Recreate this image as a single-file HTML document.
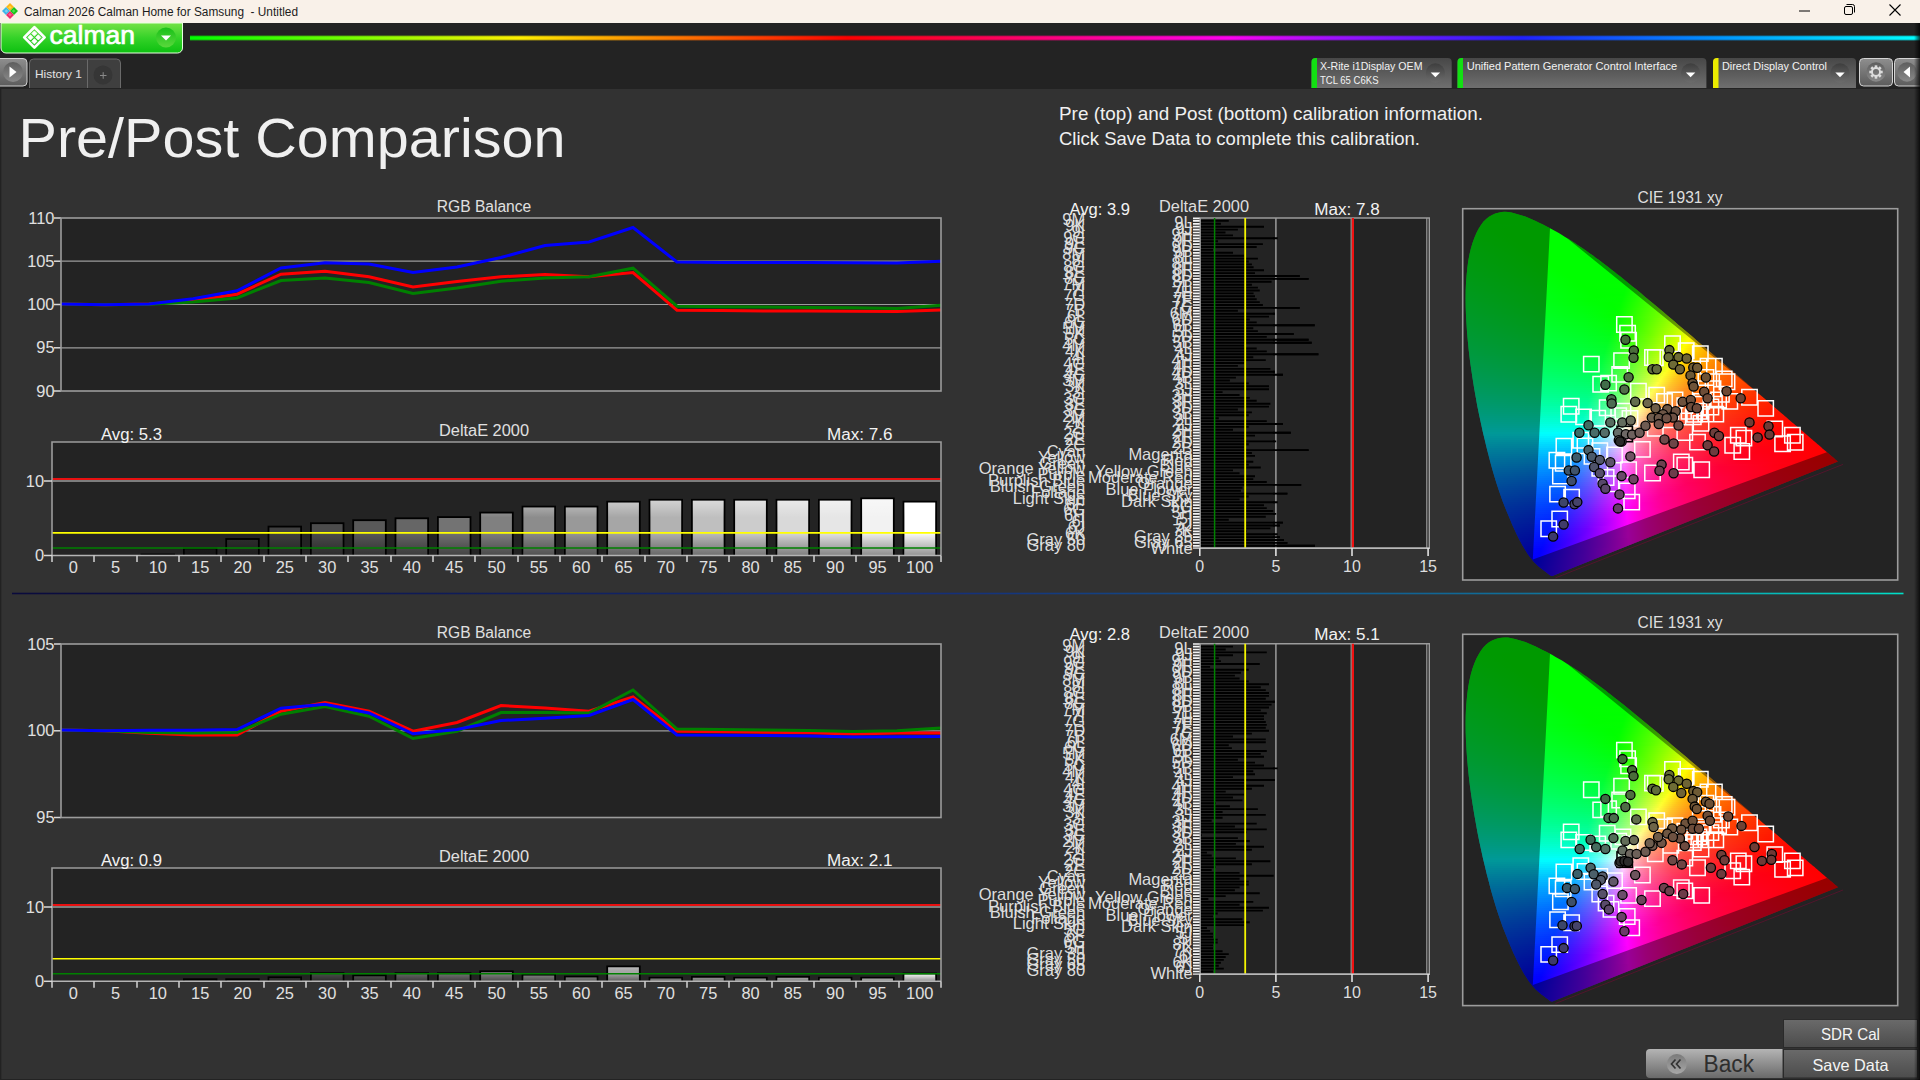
<!DOCTYPE html>
<html lang="en"><head><meta charset="utf-8"><title>Calman 2026 Calman Home for Samsung - Untitled</title>
<style>
html,body{margin:0;padding:0;width:1920px;height:1080px;overflow:hidden;background:#323232}
body{position:relative;font-family:"Liberation Sans",sans-serif}
svg{position:absolute;left:0;top:0;display:block}
svg text{font-family:"Liberation Sans",sans-serif;white-space:pre}
.cie{position:absolute;width:375px;height:367px;clip-path:polygon(88.4px 365.9px,87.6px 366px,86.8px 365.7px,86px 365.3px,85.3px 364.7px,84.5px 364.2px,83.7px 363.5px,82.9px 362.9px,82.1px 362.3px,81.4px 361.8px,80.7px 361.2px,79.9px 360.6px,79px 360px,78.1px 359.3px,77.1px 358.6px,76.1px 357.7px,74.9px 356.7px,73.7px 355.7px,73.1px 355.1px,72.4px 354.4px,71.7px 353.8px,71px 353.1px,70.3px 352.4px,69.5px 351.5px,68.7px 350.6px,67.9px 349.5px,67px 348.4px,66px 347.2px,65px 345.8px,64px 344.4px,62.9px 342.7px,61.8px 341px,60.6px 339.1px,59.4px 337.1px,58.2px 335px,56.9px 332.6px,55.5px 330px,54.1px 327.2px,52.6px 324.2px,51.1px 321px,49.5px 317.6px,47.9px 313.9px,46.2px 309.8px,44.4px 305.6px,42.5px 301px,40.6px 296.2px,38.6px 291.2px,36.7px 285.7px,34.7px 280px,32.7px 273.9px,30.7px 267.4px,28.7px 260.7px,26.7px 253.6px,24.8px 246.2px,22.8px 238.6px,20.9px 230.6px,18.9px 222.3px,17px 213.6px,15.1px 204.8px,13.3px 195.9px,11.7px 186.9px,10.1px 177.9px,8.6px 168.6px,7.2px 159.3px,5.9px 150px,4.8px 140.7px,3.9px 131.7px,3.1px 122.9px,2.5px 114.1px,2px 105.4px,1.7px 96.8px,1.6px 88.6px,1.7px 80.6px,2px 73px,2.6px 65.5px,3.3px 58.2px,4.2px 51.3px,5.4px 44.8px,6.8px 38.8px,8.4px 33.2px,10.3px 28px,12.3px 23.2px,14.6px 18.8px,17px 15px,19.5px 11.6px,22.2px 8.9px,25px 6.7px,28.1px 4.9px,31.2px 3.6px,34.3px 2.7px,37.5px 2.1px,40.8px 1.8px,44.1px 2px,47.5px 2.6px,51px 3.4px,54.4px 4.4px,57.9px 5.4px,61.3px 6.5px,64.8px 7.9px,68.2px 9.4px,71.7px 11px,75.1px 12.7px,78.5px 14.3px,81.8px 16px,85.1px 17.7px,88.4px 19.5px,91.6px 21.3px,94.8px 23.1px,98px 25px,101.1px 26.9px,104.3px 28.8px,107.4px 30.8px,110.5px 32.8px,113.6px 34.9px,116.7px 37px,119.7px 39.1px,122.8px 41.2px,125.9px 43.4px,129px 45.6px,132px 47.9px,135.1px 50.1px,138.2px 52.4px,141.2px 54.7px,144.2px 57.1px,147.3px 59.4px,150.3px 61.8px,153.3px 64.2px,156.4px 66.6px,159.4px 69px,162.4px 71.4px,165.5px 73.9px,168.5px 76.4px,171.5px 78.8px,174.6px 81.3px,177.6px 83.8px,180.6px 86.4px,183.7px 88.9px,186.7px 91.4px,189.8px 93.9px,192.8px 96.5px,195.8px 99px,198.8px 101.6px,201.9px 104.2px,204.9px 106.7px,207.9px 109.3px,210.9px 111.8px,213.9px 114.4px,216.9px 116.9px,219.9px 119.5px,222.9px 122px,225.9px 124.6px,228.9px 127.1px,231.9px 129.7px,234.8px 132.2px,237.8px 134.7px,240.7px 137.2px,243.6px 139.7px,246.5px 142.2px,249.4px 144.7px,252.3px 147.2px,255.1px 149.6px,258px 152.1px,260.8px 154.5px,263.6px 156.9px,266.3px 159.3px,269.1px 161.6px,271.8px 164px,274.5px 166.3px,277.2px 168.6px,279.9px 170.9px,282.5px 173.1px,285.1px 175.4px,287.7px 177.6px,290.2px 179.7px,292.7px 181.9px,295.2px 184px,297.6px 186.1px,300px 188.1px,302.3px 190.1px,304.6px 192.1px,306.8px 194px,309px 195.9px,311.1px 197.7px,313.2px 199.5px,315.2px 201.2px,317.2px 202.9px,319.1px 204.6px,321px 206.2px,322.9px 207.8px,324.7px 209.4px,326.5px 210.9px,328.2px 212.4px,329.9px 213.8px,331.5px 215.2px,333.1px 216.6px,334.6px 217.8px,336.1px 219.1px,337.5px 220.3px,338.9px 221.5px,340.2px 222.6px,341.5px 223.7px,342.7px 224.8px,343.9px 225.8px,345px 226.8px,346.1px 227.8px,347.2px 228.7px,348.2px 229.6px,349.2px 230.4px,350.2px 231.2px,351.1px 232px,352px 232.8px,352.8px 233.5px,353.6px 234.2px,354.4px 234.8px,355.2px 235.5px,355.9px 236.1px,356.6px 236.7px,357.3px 237.3px,357.9px 237.9px,358.5px 238.4px,359.7px 239.4px,360.9px 240.4px,361.9px 241.3px,362.9px 242.2px,363.9px 243px,364.8px 243.7px,365.6px 244.5px,366.3px 245.1px,367px 245.7px,367.7px 246.2px,368.6px 247px,369.3px 247.6px,370px 248.2px,370.7px 248.8px,371.3px 249.4px,372px 249.9px,372.6px 250.4px,373.2px 251px,373.8px 251.5px,374px 251.6px);overflow:hidden}
.cie i{display:block;height:2px;width:100%}
.r0{background:linear-gradient(90deg,#0f0 37px,#0f0 43px)}
.r1{background:linear-gradient(90deg,#0f0 28px,#0f0 53px)}
.r2{background:linear-gradient(90deg,#0f0 24px,#0f0 60px)}
.r3{background:linear-gradient(90deg,#0f0 21px,#0f0 67px)}
.r4{background:linear-gradient(90deg,#0f0 18px,#0f0 71px)}
.r5{background:linear-gradient(90deg,#0f0 16px,#0f0 74px)}
.r6{background:linear-gradient(90deg,#00ff01 14px,#0f0 79px)}
.r7{background:linear-gradient(90deg,#00ff03 13px,#0f0 84px)}
.r8{background:linear-gradient(90deg,#00ff04 12px,#0f0 59px,#0f0 88px)}
.r9{background:linear-gradient(90deg,#00ff05 11px,#0f0 47px,#0f0 91px)}
.r10{background:linear-gradient(90deg,#00ff07 10px,#0f0 46px,#0f0 94px)}
.r11{background:linear-gradient(90deg,#00ff08 9px,#0f0 47px,#0f0 97px)}
.r12{background:linear-gradient(90deg,#00ff09 8px,#0f0 48px,#0f0 102px)}
.r13{background:linear-gradient(90deg,#00ff0b 7px,#0f0 50px,#0f0 105px)}
.r14{background:linear-gradient(90deg,#00ff0c 6px,#0f0 53px,#0f0 108px)}
.r15{background:linear-gradient(90deg,#00ff0d 6px,#0f0 55px,#0f0 111px)}
.r16{background:linear-gradient(90deg,#00ff0f 5px,#0f0 58px,#0f0 114px)}
.r17{background:linear-gradient(90deg,#00ff10 4px,#0f0 60px,#0f0 117px)}
.r18{background:linear-gradient(90deg,#00ff12 3px,#0f0 63px,#0f0 120px)}
.r19{background:linear-gradient(90deg,#00ff13 3px,#0f0 66px,#0f0 122px)}
.r20{background:linear-gradient(90deg,#00ff14 3px,#0f0 68px,#0f0 125px)}
.r21{background:linear-gradient(90deg,#00ff16 2px,#0f0 71px,#0f0 128px)}
.r22{background:linear-gradient(90deg,#00ff17 2px,#0f0 74px,#0f0 131px)}
.r23{background:linear-gradient(90deg,#00ff18 2px,#0f0 77px,#0f0 135px)}
.r24{background:linear-gradient(90deg,#00ff19 1px,#0f0 80px,#0f0 137px)}
.r25{background:linear-gradient(90deg,#00ff1b 1px,#0f0 82px,#0f0 139px)}
.r26{background:linear-gradient(90deg,#00ff1c 1px,#0f0 85px,#0f0 142px)}
.r27{background:linear-gradient(90deg,#00ff1e 0px,#0f0 88px,#0f0 145px)}
.r28{background:linear-gradient(90deg,#00ff1f 0px,#0f0 91px,#0f0 147px)}
.r29{background:linear-gradient(90deg,#00ff20 0px,#0f0 94px,#0f0 150px)}
.r30{background:linear-gradient(90deg,#00ff21 0px,#0f0 96px,#0f0 153px)}
.r31{background:linear-gradient(90deg,#00ff23 0px,#0f0 99px,#0f0 155px)}
.r32{background:linear-gradient(90deg,#00ff24 0px,#0f0 102px,#0f0 157px)}
.r33{background:linear-gradient(90deg,#00ff25 0px,#0f0 105px,#0f0 160px)}
.r34{background:linear-gradient(90deg,#00ff27 0px,#0f0 108px,#0f0 162px)}
.r35{background:linear-gradient(90deg,#00ff28 0px,#0f0 111px,#02ff00 164px,#04ff00 165px)}
.r36{background:linear-gradient(90deg,#00ff2a 0px,#0f0 114px,#02ff00 163px,#0bff00 168px)}
.r37{background:linear-gradient(90deg,#00ff2b 0px,#0f0 116px,#03ff00 163px,#1f0 170px)}
.r38{background:linear-gradient(90deg,#00ff2d 0px,#0f0 119px,#02ff00 162px,#17ff00 172px)}
.r39{background:linear-gradient(90deg,#00ff2e 0px,#0f0 122px,#01ff00 161px,#1fff00 175px)}
.r40{background:linear-gradient(90deg,#00ff2f 0px,#0f0 125px,#03ff00 161px,#25ff00 177px)}
.r41{background:linear-gradient(90deg,#00ff31 0px,#0f0 128px,#02ff00 160px,#2dff00 180px)}
.r42{background:linear-gradient(90deg,#0f3 0px,#0f0 131px,#01ff00 159px,#3f0 182px)}
.r43{background:linear-gradient(90deg,#00ff34 0px,#0f0 133px,#03ff00 159px,#3aff00 184px)}
.r44{background:linear-gradient(90deg,#00ff36 0px,#00ff02 125px,#02ff00 158px,#43ff00 187px)}
.r45{background:linear-gradient(90deg,#00ff37 0px,#00ff04 125px,#01ff00 157px,#4aff00 189px)}
.r46{background:linear-gradient(90deg,#00ff39 0px,#00ff06 124px,#0f0 146px,#03ff00 157px,#54ff00 192px)}
.r47{background:linear-gradient(90deg,#00ff3b 0px,#00ff07 124px,#0f0 147px,#02ff00 156px,#5bff00 194px)}
.r48{background:linear-gradient(90deg,#00ff3c 0px,#00ff0a 123px,#0f0 149px,#03ff00 156px,#63ff00 196px)}
.r49{background:linear-gradient(90deg,#00ff3e 0px,#00ff0b 123px,#0f0 151px,#05ff00 156px,#6bff00 198px)}
.r50{background:linear-gradient(90deg,#00ff40 0px,#00ff0d 123px,#02ff00 154px,#6eff00 198px,#76ff00 201px)}
.r51{background:linear-gradient(90deg,#00ff41 0px,#00ff0f 122px,#03ff00 154px,#71ff00 198px,#7fff00 203px)}
.r52{background:linear-gradient(90deg,#00ff43 0px,#0f1 122px,#02ff00 153px,#6eff00 196px,#8f0 205px)}
.r53{background:linear-gradient(90deg,#00ff45 0px,#00ff13 121px,#02ff02 152px,#6eff00 195px,#94ff00 208px)}
.r54{background:linear-gradient(90deg,#00ff47 0px,#00ff15 121px,#03ff04 152px,#50ff00 183px,#9dff00 210px)}
.r55{background:linear-gradient(90deg,#00ff49 0px,#00ff17 121px,#02ff06 151px,#30ff00 170px,#9eff00 209px,#abff00 213px)}
.r56{background:linear-gradient(90deg,#00ff4a 0px,#00ff1a 120px,#02ff09 150px,#35ff00 171px,#a5ff00 210px,#b5ff00 215px)}
.r57{background:linear-gradient(90deg,#00ff4c 0px,#00ff1b 120px,#03ff0b 150px,#3cff00 173px,#acff00 211px,#c0ff00 217px)}
.r58{background:linear-gradient(90deg,#00ff4e 0px,#00ff1e 119px,#02ff0d 149px,#47ff00 176px,#b6ff00 213px,#ceff00 220px)}
.r59{background:linear-gradient(90deg,#00ff50 0px,#00ff20 119px,#01ff10 148px,#4fff00 178px,#beff00 214px,#daff00 222px)}
.r60{background:linear-gradient(90deg,#00ff52 0px,#0f2 119px,#03ff12 148px,#5aff00 181px,#c9ff00 216px,#e6ff00 224px)}
.r61{background:linear-gradient(90deg,#00ff54 0px,#00ff25 118px,#02ff15 147px,#65ff00 184px,#d5ff00 218px,#f3ff00 226px)}
.r62{background:linear-gradient(90deg,#00ff56 0px,#00ff27 118px,#01ff17 146px,#6eff00 186px,#e1ff00 220px,#fffe00 228px,#fffa00 229px)}
.r63{background:linear-gradient(90deg,#00ff58 0px,#00ff29 118px,#03ff1a 146px,#6fff00 185px,#dfff00 218px,#fffc00 227px,#fe0 231px)}
.r64{background:linear-gradient(90deg,#00ff5a 0px,#00ff2c 117px,#02ff1c 145px,#6fff03 184px,#e0ff00 217px,#ff0 225px,#ffde00 234px)}
.r65{background:linear-gradient(90deg,#00ff5d 0px,#00ff2e 117px,#01ff1f 144px,#6fff06 183px,#a7ff00 200px,#fffd00 224px,#ffd300 236px)}
.r66{background:linear-gradient(90deg,#00ff5f 0px,#00ff30 117px,#03ff22 144px,#6fff09 182px,#a7ff00 199px,#feff00 222px,#ffc900 238px)}
.r67{background:linear-gradient(90deg,#00ff61 0px,#0f3 117px,#02ff25 143px,#6fff0c 181px,#b3ff00 201px,#fffe00 221px,#ffc500 238px,#ffbd00 241px)}
.r68{background:linear-gradient(90deg,#00ff63 1px,#00ff35 117px,#01ff28 142px,#6cff10 179px,#c2ff00 204px,#fffc00 220px,#ffc300 237px,#ffb300 243px)}
.r69{background:linear-gradient(90deg,#00ff65 1px,#00ff38 117px,#03ff2a 142px,#6fff12 179px,#cfff00 206px,#ff0 218px,#ffc400 235px,#ffa800 246px)}
.r70{background:linear-gradient(90deg,#00ff68 1px,#00ff3b 116px,#02ff2d 141px,#6fff15 178px,#e0ff00 209px,#fffd00 217px,#ffc300 234px,#ffa000 248px)}
.r71{background:linear-gradient(90deg,#00ff6a 1px,#00ff3d 116px,#01ff30 140px,#6cff19 176px,#ddff01 207px,#feff00 215px,#ffc400 232px,#f90 250px)}
.r72{background:linear-gradient(90deg,#00ff6c 1px,#00ff40 116px,#03ff33 140px,#6fff1c 176px,#e3ff03 207px,#fffe00 214px,#ffc500 230px,#ff9100 252px,#ff8f00 253px)}
.r73{background:linear-gradient(90deg,#00ff6f 2px,#00ff43 116px,#02ff37 139px,#6fff20 175px,#e0ff08 205px,#fffc01 213px,#ffc300 229px,#ff9000 251px,#f80 255px)}
.r74{background:linear-gradient(90deg,#00ff71 2px,#00ff46 116px,#01ff3a 138px,#6cff24 173px,#ddff0c 203px,#ffff05 211px,#ffce00 224px,#ff9800 245px,#ff8000 258px)}
.r75{background:linear-gradient(90deg,#00ff74 2px,#00ff48 116px,#03ff3d 138px,#6fff27 173px,#e3ff0f 203px,#fffd09 210px,#ffc900 224px,#ff9400 245px,#ff7b00 259px)}
.r76{background:linear-gradient(90deg,#00ff76 3px,#00ff4b 117px,#02ff40 137px,#6cff2b 171px,#dbff15 200px,#ffff0e 208px,#ffc400 224px,#ff8f00 246px,#ff7500 261px)}
.r77{background:linear-gradient(90deg,#00ff79 3px,#00ff4e 117px,#01ff44 136px,#6cff2f 170px,#ddff19 199px,#fffe12 207px,#ffc202 223px,#ff8d00 245px,#ff6e00 264px)}
.r78{background:linear-gradient(90deg,#00ff7b 3px,#00ff51 117px,#02ff47 136px,#70ff32 170px,#e3ff1c 199px,#fffc16 206px,#ffc105 222px,#ff9600 239px,#ff6700 267px)}
.r79{background:linear-gradient(90deg,#00ff7e 4px,#00ff54 117px,#01ff4b 135px,#6cff37 168px,#dbff22 196px,#fffe1b 204px,#ffc50a 219px,#f90 236px,#ff6900 264px,#ff6200 269px)}
.r80{background:linear-gradient(90deg,#00ff81 4px,#00ff57 117px,#03ff4e 135px,#70ff3a 168px,#e1ff25 196px,#fffd1f 203px,#ffc30d 218px,#ff8e00 239px,#ff6000 269px,#ff5c00 272px)}
.r81{background:linear-gradient(90deg,#00ff84 4px,#00ff5b 117px,#02ff52 134px,#70ff3e 167px,#e3ff29 195px,#ffff24 201px,#ffc512 216px,#ff9101 236px,#ff6200 265px,#ff5700 274px)}
.r82{background:linear-gradient(90deg,#00ff86 5px,#00ff5e 118px,#01ff56 133px,#6cff43 165px,#dbff30 192px,#fffd29 200px,#ffc315 215px,#ff8f03 235px,#ff6000 264px,#ff5300 276px)}
.r83{background:linear-gradient(90deg,#00ff89 5px,#00ff61 118px,#03ff5a 133px,#70ff47 165px,#e1ff33 192px,#feff2e 198px,#ffc118 214px,#ff8e06 234px,#ff6e00 252px,#ff4e00 278px)}
.r84{background:linear-gradient(90deg,#00ff8c 5px,#00ff65 118px,#02ff5e 132px,#6cff4c 163px,#deff39 190px,#fffe33 197px,#ffc61e 211px,#ff900a 231px,#ff6b00 252px,#ff4900 281px)}
.r85{background:linear-gradient(90deg,#00ff8f 5px,#00ff68 118px,#01ff62 131px,#6cff50 162px,#e0ff3d 189px,#fffc37 196px,#ffc421 210px,#ff8e0d 230px,#ff6500 254px,#ff4500 283px)}
.r86{background:linear-gradient(90deg,#00ff92 6px,#00ff6c 119px,#03ff66 131px,#70ff54 162px,#e1ff42 188px,#ffff3e 194px,#ffc526 208px,#ff9111 227px,#ff6200 254px,#ff4100 285px)}
.r87{background:linear-gradient(90deg,#00ff95 6px,#00ff6f 119px,#02ff6a 130px,#6cff5a 160px,#deff48 186px,#fffd42 193px,#ffc32a 207px,#ff8f14 226px,#ff6101 253px,#ff3c00 288px)}
.r88{background:linear-gradient(90deg,#00ff98 7px,#00ff73 120px,#01ff6f 129px,#6cff5f 159px,#dfff4d 185px,#feff49 191px,#ffc12e 206px,#ff8d17 225px,#ff5f03 252px,#ff3900 290px)}
.r89{background:linear-gradient(90deg,#00ff9c 7px,#0f7 120px,#03ff73 129px,#70ff63 159px,#e1ff53 184px,#fffe4e 190px,#ffc634 203px,#ff921d 221px,#ff6308 247px,#ff4900 269px,#ff3400 293px)}
.r90{background:linear-gradient(90deg,#00ff9f 7px,#00ff7b 121px,#02ff78 128px,#6cff69 157px,#deff59 182px,#fffc53 189px,#ffc438 202px,#ff9120 220px,#ff620a 246px,#ff4500 271px,#ff3100 295px)}
.r91{background:linear-gradient(90deg,#00ffa2 8px,#00ff7f 122px,#04ff7c 128px,#71ff6d 157px,#dfff5e 181px,#ffff5a 187px,#ffc63e 200px,#ff9124 218px,#ff620d 244px,#ff4100 273px,#ff2d00 298px)}
.r92{background:linear-gradient(90deg,#00ffa6 8px,#00ff83 123px,#03ff81 127px,#6dff73 155px,#dcff65 179px,#fffd5f 186px,#ffc442 199px,#ff8f27 217px,#ff600f 243px,#ff3d00 275px,#ff2b00 299px)}
.r93{background:linear-gradient(90deg,#0fa 8px,#00ff87 123px,#05ff86 127px,#71ff78 155px,#e3ff6a 179px,#feff67 184px,#ffc246 198px,#ff8d2a 216px,#ff5e12 242px,#ff3800 278px,#ff2800 301px)}
.r94{background:linear-gradient(90deg,#00ffad 8px,#00ff8c 124px,#3bff84 141px,#a8ff77 166px,#fffe6c 183px,#ffc34c 196px,#ff8e2f 214px,#ff6016 239px,#ff3700 277px,#ff2500 303px)}
.r95{background:linear-gradient(90deg,#00ffb1 9px,#03ff90 125px,#6dff84 152px,#dcff77 175px,#fffc72 182px,#ffc150 195px,#ff8c32 213px,#ff5e18 238px,#ff3501 276px,#ff2100 306px)}
.r96{background:linear-gradient(90deg,#00ffb5 9px,#02ff96 124px,#6dff8a 151px,#ddff7e 174px,#ffff7a 180px,#ffc659 192px,#ff913a 209px,#ff621e 233px,#ff3906 269px,#ff2600 294px,#ff1e00 308px)}
.r97{background:linear-gradient(90deg,#00ffb9 10px,#00ff9b 123px,#6dff90 150px,#dfff84 173px,#fffd80 179px,#ffc45d 191px,#ff8f3d 208px,#ff6021 232px,#ff3708 268px,#ff2500 294px,#ff1b00 311px)}
.r98{background:linear-gradient(90deg,#00ffbd 10px,#03ffa1 123px,#6dff97 149px,#dbff8c 171px,#feff88 177px,#ffc262 190px,#ff8d40 207px,#ff5f23 231px,#ff3609 267px,#f20 296px,#ff1800 314px)}
.r99{background:linear-gradient(90deg,#00ffc1 11px,#01ffa7 122px,#6dff9d 148px,#ddff93 170px,#fffe8f 176px,#ffc469 188px,#ff9047 204px,#ff6229 227px,#ff380e 262px,#ff1f00 297px,#ff1500 316px)}
.r100{background:linear-gradient(90deg,#00ffc5 11px,#00ffad 121px,#6dffa4 147px,#dfff9a 169px,#fffb95 175px,#ffc16d 187px,#ff8e4b 203px,#ff602b 226px,#ff370f 261px,#ff1c00 300px,#ff1300 318px)}
.r101{background:linear-gradient(90deg,#00ffc9 12px,#03ffb3 121px,#6dffaa 146px,#dbffa2 167px,#ffff9f 173px,#ffc778 184px,#ff9454 199px,#ff6533 221px,#ff3b15 254px,#ff1a00 301px,#ff1000 321px)}
.r102{background:linear-gradient(90deg,#00ffce 12px,#01ffb9 120px,#6dffb1 145px,#ddffa9 166px,#fffda5 172px,#ffc57d 183px,#ff9258 198px,#ff6336 220px,#ff3917 253px,#ff1700 303px,#ff0e00 323px)}
.r103{background:linear-gradient(90deg,#00ffd3 12px,#00ffc0 119px,#68ffb9 143px,#d9ffb2 164px,#feffaf 170px,#ffc282 182px,#ff905c 197px,#ff6138 219px,#ff3819 252px,#ff1400 305px,#ff0c00 325px)}
.r104{background:linear-gradient(90deg,#00ffd7 12px,#02ffc6 119px,#6dffc0 143px,#dbffba 163px,#fffeb7 169px,#ffc48a 180px,#ff9062 195px,#ff613d 217px,#ff371c 250px,#ff1401 302px,#ff0900 327px)}
.r105{background:linear-gradient(90deg,#00ffdc 13px,#01ffcd 118px,#6dffc8 142px,#ddffc2 162px,#fcffc1 167px,#ffbd8c 180px,#ff8b63 195px,#ff5d3e 217px,#ff351e 250px,#ff1202 303px,#ff0700 330px)}
.r106{background:linear-gradient(90deg,#00ffe1 13px,#00ffd5 117px,#68ffd0 140px,#d9ffcb 160px,#ffffca 166px,#ffc89c 176px,#ff9471 190px,#ff664a 210px,#ff3c27 240px,#ff1809 288px,#ff0900 321px,#ff0500 332px)}
.r107{background:linear-gradient(90deg,#00ffe6 13px,#02ffdc 117px,#6effd8 140px,#e1ffd4 160px,#fffcd1 165px,#ffc5a1 175px,#ff9275 189px,#ff644d 209px,#ff3a29 239px,#ff160a 287px,#ff0700 323px,#ff0300 334px)}
.r108{background:linear-gradient(90deg,#00ffeb 14px,#01ffe3 116px,#6effe0 139px,#dfd 158px,#feffdd 163px,#ffc3a7 174px,#ff9079 188px,#ff6150 208px,#ff392c 238px,#ff150c 286px,#ff0400 326px,#f00 337px)}
.r109{background:linear-gradient(90deg,#00fff1 14px,#00ffeb 115px,#63ffe9 136px,#d2ffe7 155px,#fffde5 162px,#ffc5b1 172px,#ff9080 186px,#ff6155 206px,#ff382f 236px,#ff140e 284px,#ff0200 328px,#f00 339px)}
.r110{background:linear-gradient(90deg,#00fff6 15px,#02fff3 115px,#6efff2 137px,#e1fff1 156px,#fcfff1 160px,#ffbdb2 172px,#ff8b82 186px,#ff5d57 206px,#ff342f 237px,#ff120e 286px,#f00 331px,#f00 341px)}
.r111{background:linear-gradient(90deg,#00fffc 15px,#00fffc 114px,#6efffc 136px,#dcfffb 154px,#fffffb 159px,#ffc4c1 169px,#ff918f 182px,#ff6361 201px,#ff3938 230px,#ff1515 276px,#f00 332px,#f00 344px)}
.r112{background:linear-gradient(90deg,#00fcff 16px,#00faff 113px,#61f9ff 133px,#d2f8ff 152px,#fff5fc 159px,#ffbdc3 169px,#ff898e 183px,#ff5b5f 203px,#ff3336 233px,#ff1113 281px,#f00 330px,#f00 346px)}
.r113{background:linear-gradient(90deg,#00f6ff 16px,#02f1ff 113px,#6df0ff 135px,#dfeeff 154px,#ffebfd 159px,#ffb5c4 169px,#ff848f 183px,#ff5760 203px,#ff3037 233px,#ff0f14 281px,#ff0002 326px,#f00 349px)}
.r114{background:linear-gradient(90deg,#00f1ff 17px,#00e9ff 112px,#69e7ff 134px,#d8e4ff 153px,#ffe2fe 159px,#ffaec5 169px,#ff7e91 183px,#ff5362 203px,#ff2e39 233px,#ff0d15 281px,#ff0004 322px,#f00 351px)}
.r115{background:linear-gradient(90deg,#00ebff 17px,#03e2ff 112px,#70deff 135px,#dfdaff 154px,#ffd9fe 159px,#ffa7c6 169px,#ff7992 183px,#ff5063 203px,#ff2b3a 233px,#ff0b16 281px,#ff0006 319px,#f00 354px)}
.r116{background:linear-gradient(90deg,#00e5ff 18px,#01daff 111px,#6cd6ff 134px,#ded1ff 154px,#ffd0ff 159px,#ffa0c8 169px,#ff7494 183px,#ff4c65 203px,#ff283b 233px,#ff0a17 281px,#ff0008 315px,#f00 354px,#f00 355px)}
.r117{background:linear-gradient(90deg,#00e0ff 18px,#00d3ff 110px,#68ceff 133px,#d8c8ff 153px,#fec6ff 159px,#ff96c4 170px,#ff6a8f 185px,#ff4461 206px,#ff2238 238px,#ff0414 289px,#ff0005 326px,#f00 358px)}
.r118{background:linear-gradient(90deg,#00dbff 19px,#03ccff 110px,#6fc6ff 134px,#debfff 154px,#febeff 159px,#ff8cc1 171px,#ff638e 186px,#ff3e5f 208px,#ff1d36 241px,#ff0113 294px,#f00 354px,#f00 360px)}
.r119{background:linear-gradient(90deg,#00d5ff 19px,#01c5ff 109px,#6bbeff 133px,#deb7ff 154px,#fdb5ff 159px,#ff83be 172px,#ff5a8a 188px,#ff375c 211px,#ff1733 246px,#ff0013 297px,#f00 357px,#f00 362px)}
.r120{background:linear-gradient(90deg,#00d0ff 20px,#00beff 108px,#68b7ff 132px,#d8afff 153px,#ffaafc 160px,#ff80c4 171px,#ff5a91 186px,#ff3762 208px,#ff1839 241px,#ff0016 292px,#f00 358px,#f00 364px)}
.r121{background:linear-gradient(90deg,#00cbff 20px,#02b8ff 108px,#6eafff 133px,#dea7ff 154px,#ffa2fc 160px,#ff7ac5 171px,#ff548f 187px,#ff3362 209px,#ff1538 243px,#ff0018 289px,#f00 360px,#f00 367px)}
.r122{background:linear-gradient(90deg,#00c6ff 21px,#01b1ff 107px,#6ba9ff 132px,#dd9fff 154px,#ff9bfd 160px,#ff72c2 172px,#ff4e8e 188px,#ff2d60 211px,#ff1136 246px,#ff001b 286px,#f00 361px,#f00 370px)}
.r123{background:linear-gradient(90deg,#00c1ff 21px,#00abff 106px,#67a2ff 131px,#d898ff 153px,#ff93fe 160px,#ff6cc3 172px,#ff498f 188px,#ff2a61 211px,#ff0e38 246px,#ff001e 282px,#f00 361px,#f00 372px)}
.r124{background:linear-gradient(90deg,#00bcff 22px,#02a5ff 106px,#6d9bff 132px,#dd90ff 154px,#ff8cfe 160px,#ff67c4 172px,#ff4591 188px,#ff2762 211px,#ff0c39 246px,#ff0021 279px,#ff0001 358px,#f00 374px)}
.r125{background:linear-gradient(90deg,#00b7ff 22px,#00a0ff 105px,#6a95ff 131px,#dd89ff 154px,#ff85ff 160px,#ff61c5 172px,#ff4192 188px,#ff2464 211px,#ff0a3a 246px,#ff0024 275px,#ff0004 351px,#f00 374px)}
.r126{background:linear-gradient(90deg,#00b2ff 23px,#039aff 105px,#708eff 132px,#e282ff 155px,#fe7eff 160px,#ff5ac2 173px,#ff3a8e 190px,#ff1e60 214px,#ff0638 250px,#ff0025 276px,#ff0005 352px,#f00 373px)}
.r127{background:linear-gradient(90deg,#00aeff 23px,#0294ff 104px,#6d88ff 131px,#dd7bff 154px,#fe78ff 160px,#ff53c0 174px,#ff348b 192px,#ff195d 217px,#ff0235 255px,#ff0012 316px,#ff0001 368px)}
.r128{background:linear-gradient(90deg,#00a9ff 24px,#008fff 103px,#6e82ff 131px,#dc75ff 154px,#fd71ff 160px,#ff4ec1 174px,#ff308c 192px,#ff165e 217px,#ff0036 255px,#ff0013 316px,#ff0003 363px)}
.r129{background:linear-gradient(90deg,#00a4ff 24px,#028aff 103px,#6f7cff 131px,#e26eff 155px,#ff68fc 161px,#ff49c2 174px,#ff2d8d 192px,#ff135e 218px,#ff0037 255px,#ff0014 316px,#ff0005 358px)}
.r130{background:linear-gradient(90deg,#00a0ff 25px,#0185ff 102px,#6c77ff 130px,#dc68ff 154px,#ff62fc 161px,#ff44c3 174px,#ff298e 192px,#ff105f 218px,#ff003b 251px,#ff0017 310px,#ff0007 353px)}
.r131{background:linear-gradient(90deg,#009bff 26px,#0080ff 101px,#6d71ff 130px,#dc62ff 154px,#ff5cfd 161px,#ff40c4 174px,#ff2590 192px,#ff0e61 218px,#ff003f 248px,#ff001a 305px,#ff000a 348px)}
.r132{background:linear-gradient(90deg,#0097ff 26px,#027bff 101px,#6e6cff 130px,#e15cff 155px,#ff57fe 161px,#ff3bc5 174px,#ff2291 192px,#ff0b62 218px,#f04 244px,#ff001e 298px,#ff000c 343px)}
.r133{background:linear-gradient(90deg,#0092ff 27px,#0176ff 100px,#6b67ff 129px,#dc57ff 154px,#ff51fe 161px,#ff37c6 174px,#ff1f92 192px,#ff0963 218px,#ff0049 240px,#ff0023 292px,#ff000f 338px)}
.r134{background:linear-gradient(90deg,#008eff 27px,#0072ff 99px,#6862ff 128px,#dc51ff 154px,#ff4cff 161px,#ff32c7 174px,#ff1b93 192px,#ff0664 218px,#ff004c 238px,#ff0026 288px,#f01 333px)}
.r135{background:linear-gradient(90deg,#008aff 28px,#026dff 99px,#6d5dff 129px,#e04bff 155px,#ff46ff 161px,#ff2dc4 175px,#ff1690 194px,#ff0261 221px,#ff0038 262px,#ff0014 327px,#ff0014 328px)}
.r136{background:linear-gradient(90deg,#0086ff 29px,#0169ff 98px,#6f57ff 129px,#e045ff 155px,#fe41ff 161px,#ff27c2 176px,#ff128f 195px,#ff005f 223px,#ff0036 265px,#ff0017 323px)}
.r137{background:linear-gradient(90deg,#0082ff 29px,#0364ff 98px,#7053ff 129px,#e040ff 155px,#fe3bff 161px,#ff22bf 177px,#ff0d8b 197px,#ff0063 221px,#ff003a 262px,#ff001a 318px)}
.r138{background:linear-gradient(90deg,#007dff 30px,#0260ff 97px,#6d4eff 128px,#e03bff 155px,#ff35fc 162px,#ff1fc4 176px,#ff0b8f 196px,#ff006a 217px,#ff003f 256px,#ff001d 313px)}
.r139{background:linear-gradient(90deg,#0079ff 31px,#005dff 96px,#6e4aff 128px,#e036ff 155px,#ff30fd 162px,#ff1bc5 176px,#ff0890 196px,#ff006e 215px,#ff0043 253px,#ff0020 308px)}
.r140{background:linear-gradient(90deg,#0075ff 31px,#0258ff 96px,#6f45ff 128px,#e031ff 155px,#ff2bfd 162px,#ff16c2 177px,#ff048f 197px,#ff006b 218px,#ff0040 257px,#ff0023 303px)}
.r141{background:linear-gradient(90deg,#0071ff 32px,#0155ff 95px,#6c41ff 127px,#df2cff 155px,#ff26fe 162px,#ff13c3 177px,#ff0290 197px,#ff0061 226px,#ff0037 270px,#ff0026 298px)}
.r142{background:linear-gradient(90deg,#006dff 33px,#0051ff 94px,#6d3dff 127px,#df28ff 155px,#ff22fe 162px,#ff0fc4 177px,#ff0091 197px,#ff0062 226px,#ff0038 270px,#ff002a 293px)}
.r143{background:linear-gradient(90deg,#0069ff 33px,#024dff 94px,#6e38ff 127px,#df23ff 155px,#ff1dff 162px,#ff0bc5 177px,#ff0096 195px,#ff0067 223px,#ff003d 265px,#ff002e 288px)}
.r144{background:linear-gradient(90deg,#0065ff 34px,#0149ff 93px,#6c35ff 126px,#df1fff 155px,#ff19ff 162px,#ff08c6 177px,#ff009b 193px,#ff006b 221px,#ff0040 262px,#ff0032 283px)}
.r145{background:linear-gradient(90deg,#0062ff 35px,#0346ff 93px,#7030ff 127px,#e319ff 156px,#fe14ff 162px,#ff04c3 178px,#ff0090 199px,#ff0061 229px,#ff0038 274px,#ff0036 278px)}
.r146{background:linear-gradient(90deg,#005eff 35px,#0242ff 92px,#6e2dff 126px,#df16ff 155px,#ff0ffc 163px,#ff00c1 179px,#ff008d 201px,#ff005f 232px,#ff003a 273px)}
.r147{background:linear-gradient(90deg,#005aff 36px,#013fff 91px,#6f29ff 126px,#df12ff 155px,#ff0bfc 163px,#ff00c5 178px,#ff0090 200px,#ff0061 231px,#ff003e 268px)}
.r148{background:linear-gradient(90deg,#0056ff 37px,#033bff 91px,#7025ff 126px,#e30dff 156px,#ff07fd 163px,#ff00cf 175px,#ff009b 195px,#ff006b 224px,#ff0043 263px)}
.r149{background:linear-gradient(90deg,#0053ff 38px,#0238ff 90px,#6d22ff 125px,#de0aff 155px,#ff03fd 163px,#ff00c4 179px,#ff0090 201px,#ff0061 233px,#ff0048 258px)}
.r150{background:linear-gradient(90deg,#004fff 39px,#0135ff 89px,#6e1eff 125px,#de06ff 155px,#ff00fe 163px,#ff00c5 179px,#ff0091 201px,#ff0061 233px,#ff004d 253px)}
.r151{background:linear-gradient(90deg,#004bff 40px,#0232ff 89px,#6f1aff 125px,#e201ff 156px,#ff00fe 163px,#ff00c5 179px,#ff0092 201px,#ff0062 233px,#ff0053 248px)}
.r152{background:linear-gradient(90deg,#0047ff 41px,#012fff 88px,#6c17ff 124px,#de00ff 155px,#f0f 163px,#ff00c6 179px,#ff0091 202px,#ff0062 234px,#ff0059 243px)}
.r153{background:linear-gradient(90deg,#04f 42px,#032cff 88px,#7113ff 125px,#d600ff 153px,#f0f 163px,#ff00c4 180px,#ff0090 203px,#ff0061 236px,#ff005f 238px)}
.r154{background:linear-gradient(90deg,#0040ff 43px,#0229ff 87px,#6e10ff 124px,#c600ff 149px,#fe00ff 163px,#ff00c2 181px,#ff008d 205px,#ff0065 233px)}
.r155{background:linear-gradient(90deg,#003dff 43px,#0126ff 86px,#6f0dff 124px,#b800ff 145px,#ff00fc 164px,#ff00c3 181px,#ff008e 205px,#ff006c 228px)}
.r156{background:linear-gradient(90deg,#003aff 44px,#0323ff 86px,#7009ff 124px,#ad00ff 142px,#ff00fc 164px,#ff00c4 181px,#ff008f 205px,#ff0073 223px)}
.r157{background:linear-gradient(90deg,#0036ff 45px,#0220ff 85px,#6e07ff 123px,#9f00ff 138px,#ff00fd 164px,#ff00c2 182px,#ff008e 206px,#ff007b 218px)}
.r158{background:linear-gradient(90deg,#03f 46px,#011eff 84px,#6f04ff 123px,#d200ff 152px,#ff00fd 164px,#ff00c2 182px,#ff008f 206px,#ff0084 213px)}
.r159{background:linear-gradient(90deg,#002fff 47px,#031bff 84px,#6f00ff 123px,#e100ff 156px,#ff00fe 164px,#ff00c3 182px,#ff008e 207px,#ff008c 208px)}
.r160{background:linear-gradient(90deg,#002cff 48px,#0218ff 83px,#6d00ff 122px,#e100ff 156px,#ff00fe 164px,#ff00c4 182px,#ff0096 203px)}
.r161{background:linear-gradient(90deg,#0028ff 49px,#0116ff 82px,#6800ff 120px,#d900ff 154px,#f0f 164px,#ff00c5 182px,#ff00a0 198px)}
.r162{background:linear-gradient(90deg,#0025ff 49px,#0213ff 82px,#5d00ff 116px,#ce00ff 151px,#f0f 164px,#ff00c5 182px,#ff00ab 193px)}
.r163{background:linear-gradient(90deg,#02f 50px,#0211ff 81px,#5300ff 112px,#c400ff 148px,#f0f 164px,#ff00c4 183px,#ff00b7 188px)}
.r164{background:linear-gradient(90deg,#001eff 52px,#030eff 81px,#4800ff 108px,#ba00ff 145px,#ff00fc 165px,#ff00c4 183px)}
.r165{background:linear-gradient(90deg,#001cff 52px,#020cff 80px,#3f00ff 104px,#b000ff 142px,#ff00fd 165px,#ff00d2 178px)}
.r166{background:linear-gradient(90deg,#0018ff 53px,#010aff 79px,#3800ff 101px,#a600ff 139px,#ff00fd 165px,#ff00e2 173px)}
.r167{background:linear-gradient(90deg,#0015ff 55px,#0307ff 79px,#3100ff 98px,#a000ff 137px,#ff00fd 165px,#ff00f3 168px)}
.r168{background:linear-gradient(90deg,#0012ff 56px,#0205ff 78px,#3500ff 99px,#a400ff 138px,#f900ff 163px)}
.r169{background:linear-gradient(90deg,#000eff 57px,#0103ff 77px,#6f00ff 120px,#e000ff 156px,#e700ff 158px)}
.r170{background:linear-gradient(90deg,#000bff 58px,#0300ff 77px,#6f00ff 120px,#d500ff 153px)}
.r171{background:linear-gradient(90deg,#0008ff 59px,#0200ff 76px,#6d00ff 119px,#c500ff 148px)}
.r172{background:linear-gradient(90deg,#0005ff 60px,#0300ff 76px,#7100ff 120px,#b500ff 143px)}
.r173{background:linear-gradient(90deg,#0001ff 63px,#0200ff 75px,#6f00ff 119px,#a600ff 138px)}
.r174{background:linear-gradient(90deg,#00f 63px,#0200ff 74px,#6d00ff 118px,#9700ff 133px)}
.r175{background:linear-gradient(90deg,#00f 65px,#0300ff 74px,#7000ff 119px,#8900ff 128px)}
.r176{background:linear-gradient(90deg,#00f 67px,#0200ff 73px,#6e00ff 118px,#7c00ff 123px)}
.r177{background:linear-gradient(90deg,#00f 69px,#0a00ff 76px,#6f00ff 118px)}
.r178{background:linear-gradient(90deg,#0100ff 71px,#6300ff 113px)}
.r179{background:linear-gradient(90deg,#0800ff 74px,#5700ff 108px)}
.r180{background:linear-gradient(90deg,#0e00ff 76px,#4c00ff 103px)}
.r181{background:linear-gradient(90deg,#1600ff 79px,#4100ff 98px)}
.r182{background:linear-gradient(90deg,#1b00ff 81px,#3600ff 93px)}
</style></head><body>
<svg width="1920" height="1080" viewBox="0 0 1920 1080">
<defs>
<linearGradient id="rb" x1="0" x2="1" y1="0" y2="0">
<stop offset="0" stop-color="#00ff00"/><stop offset=".10" stop-color="#7fff00"/><stop offset=".19" stop-color="#ffee00"/>
<stop offset=".26" stop-color="#ff9000"/><stop offset=".38" stop-color="#ff0000"/><stop offset=".50" stop-color="#ff0080"/>
<stop offset=".60" stop-color="#ff00f0"/><stop offset=".66" stop-color="#a010ff"/><stop offset=".77" stop-color="#2020ff"/>
<stop offset=".88" stop-color="#0090ff"/><stop offset="1" stop-color="#00ffff"/></linearGradient>
<linearGradient id="rbv" x1="0" x2="0" y1="0" y2="1"><stop offset="0" stop-color="#232323" stop-opacity="1"/><stop offset=".3" stop-color="#232323" stop-opacity="0"/><stop offset=".7" stop-color="#232323" stop-opacity="0"/><stop offset="1" stop-color="#232323" stop-opacity="1"/></linearGradient>
<linearGradient id="gbtn" x1="0" x2="0" y1="0" y2="1"><stop offset="0" stop-color="#74e247"/><stop offset=".5" stop-color="#34d228"/><stop offset="1" stop-color="#0cc010"/></linearGradient>
<linearGradient id="gcirc" x1="0" x2="0" y1="0" y2="1"><stop offset="0" stop-color="#18c018"/><stop offset="1" stop-color="#5ad83c"/></linearGradient>
<linearGradient id="dd" x1="0" x2="0" y1="0" y2="1"><stop offset="0" stop-color="#474747"/><stop offset="1" stop-color="#6f6f6f"/></linearGradient>
<linearGradient id="ddc" x1="0" x2="0" y1="0" y2="1"><stop offset="0" stop-color="#3e3e3e"/><stop offset="1" stop-color="#6c6c6c"/></linearGradient>
<linearGradient id="gb" x1="0" x2="0" y1="0" y2="1"><stop offset="0" stop-color="#8e8e8e"/><stop offset="1" stop-color="#5c5c5c"/></linearGradient>
<linearGradient id="gbc" x1="0" x2="0" y1="0" y2="1"><stop offset="0" stop-color="#5e5e5e"/><stop offset="1" stop-color="#8a8a8a"/></linearGradient>
<linearGradient id="sep" x1="0" x2="1" y1="0" y2="0"><stop offset="0" stop-color="#0a0a3c"/><stop offset=".5" stop-color="#15307a"/><stop offset=".8" stop-color="#10709a"/><stop offset="1" stop-color="#00e0c8"/></linearGradient>
<linearGradient id="bk" x1="0" x2="0" y1="0" y2="1"><stop offset="0" stop-color="#b4b4b4"/><stop offset="1" stop-color="#6a6a6a"/></linearGradient>
<linearGradient id="bkc" x1="0" x2="0" y1="0" y2="1"><stop offset="0" stop-color="#7a7a7a"/><stop offset="1" stop-color="#a8a8a8"/></linearGradient>
<linearGradient id="sb" x1="0" x2="0" y1="0" y2="1"><stop offset="0" stop-color="#6a6a6a"/><stop offset="1" stop-color="#4c4c4c"/></linearGradient>
<linearGradient id="rsh" x1="0" x2="1" y1="0" y2="0"><stop offset="0" stop-color="#000" stop-opacity="0"/><stop offset="1" stop-color="#000" stop-opacity=".75"/></linearGradient>
<linearGradient id="bg1" gradientUnits="userSpaceOnUse" x1="0" x2="0" y1="497" y2="555.5"><stop offset="0" stop-color="#fff" stop-opacity=".5"/><stop offset=".35" stop-color="#fff" stop-opacity="0"/><stop offset=".6" stop-color="#000" stop-opacity="0"/><stop offset="1" stop-color="#000" stop-opacity=".42"/></linearGradient>
<linearGradient id="bg2" gradientUnits="userSpaceOnUse" x1="0" x2="0" y1="964" y2="981"><stop offset="0" stop-color="#fff" stop-opacity=".4"/><stop offset=".4" stop-color="#fff" stop-opacity="0"/><stop offset=".55" stop-color="#000" stop-opacity="0"/><stop offset="1" stop-color="#000" stop-opacity=".42"/></linearGradient>
</defs>
<rect x="0" y="0" width="1920" height="23" fill="#f9f1e9"/>
<rect x="0" y="23" width="1920" height="66" fill="#232323"/>
<rect x="0" y="89" width="1920" height="991" fill="#323232"/>
<rect x="0" y="89" width="1.3" height="991" fill="#222"/><rect x="0" y="1079" width="1920" height="1" fill="#232323"/>
<g transform="translate(10,11)"><path d="M0-8 4-4 0 0-4-4Z" fill="#fcb714"/><path d="M-8 0-4-4 0 0-4 4Z" fill="#3db7e9"/><path d="M8 0 4-4 0 0 4 4Z" fill="#19c519"/><path d="M0 8 4 4 0 0-4 4Z" fill="#ee2a6b"/><path d="M0-5.3 1.8-3.6 0-1.9-1.8-3.6Z" fill="#ffd24a"/><path d="M-5.3 0-3.6-1.8-1.9 0-3.6 1.8Z" fill="#7fd0f3"/><path d="M5.3 0 3.6-1.8 1.9 0 3.6 1.8Z" fill="#4fe04f"/><path d="M0 5.3 1.8 3.6 0 1.9-1.8 3.6Z" fill="#f5638f"/></g>
<text x="24" y="16" font-size="12" fill="#1c1c1c" textLength="274" lengthAdjust="spacingAndGlyphs" xml:space="preserve">Calman 2026 Calman Home for Samsung  - Untitled</text>
<path d="M1799 11h11" stroke="#000" stroke-width="1" fill="none"/>
<path d="M1844.5 8.5h7a1.5 1.5 0 0 1 1.5 1.5v7h-8.5z" transform="translate(0,-1)" stroke="#000" stroke-width="1" fill="none" style="display:none"/>
<rect x="1844.5" y="6.5" width="8" height="8" rx="1.5" fill="none" stroke="#000" stroke-width="1"/><path d="M1846.5 4.5h6a2 2 0 0 1 2 2v6" fill="none" stroke="#000" stroke-width="1"/>
<path d="M1889.5 4.5 1900.5 15.5M1900.5 4.5 1889.5 15.5" stroke="#000" stroke-width="1.1" fill="none"/>
<rect x="190" y="35" width="1730" height="6" fill="url(#rb)"/><rect x="190" y="35" width="1730" height="6" fill="url(#rbv)"/>
<path d="M1 23H182.5V48a5 5 0 0 1-5 5H6a5 5 0 0 1-5-5Z" fill="url(#gbtn)" stroke="#e8ffe0" stroke-width="1"/>
<rect x="1" y="23" width="181.5" height="1" fill="#232323" opacity=".0"/>
<g transform="translate(34.4,37.4)" fill="none" stroke="#fff" stroke-width="2.7" stroke-linejoin="round"><path d="M0-10.2 10.2 0 0 10.2-10.2 0Z"/></g><g transform="translate(34.4,37.4)" fill="#fff" stroke="#fff" stroke-width=".800" stroke-linejoin="round"><path d="M0-6.5 2.6-3.9 0-1.3-2.6-3.9Z"/><path d="M-3.9-2.6-1.3 0-3.9 2.6-6.5 0Z"/><path d="M3.9-2.6 6.5 0 3.9 2.6 1.3 0Z"/><path d="M0 1.3 2.6 3.9 0 6.5-2.6 3.9Z"/></g>
<text x="49.5" y="43.6" font-size="25.8" fill="#fff" textLength="85.5" lengthAdjust="spacingAndGlyphs" stroke="#fff" stroke-width=".700">calman</text>
<circle cx="166" cy="37.5" r="10" fill="url(#gcirc)"/><path d="M161 35.5h10l-5 5z" fill="#fff"/>
<path d="M-2 58.5H23a4 4 0 0 1 4 4V82a4 4 0 0 1-4 4H-2Z" fill="url(#gb)" stroke="#d0d0d0" stroke-width="1"/>
<circle cx="13" cy="72" r="10" fill="url(#gbc)"/><path d="M9.5 66.5v11l7-5.5z" fill="#fff"/>
<path d="M29.5 88V63a4 4 0 0 1 4-4H116.5a4 4 0 0 1 4 4V88" fill="#3f3f3f" stroke="#6a6a6a" stroke-width="1"/>
<path d="M87.5 59.5V88" stroke="#6a6a6a" stroke-width="1"/>
<text x="35" y="77.5" font-size="11.3" fill="#e4e4e4" textLength="47" lengthAdjust="spacingAndGlyphs">History 1</text>
<circle cx="103" cy="75" r="9.5" fill="#363636"/><path d="M100 75.5h6.5M103.2 72.2v6.6" stroke="#8a8a8a" stroke-width="1"/>
<path d="M1311.5 88V62a4 4 0 0 1 4-4H1447.7a4 4 0 0 1 4 4V88Z" fill="url(#dd)"/><path d="M1311.5 88V62a4 4 0 0 1 4-4h1.5V88Z" fill="#12e012"/><circle cx="1435.4" cy="73" r="9.7" fill="url(#ddc)"/><path d="M1430.7 72.5h9.4l-4.7 4.7z" fill="#fff"/><text x="1320" y="70" font-size="10.6" fill="#f2f2f2" textLength="102.5" lengthAdjust="spacingAndGlyphs">X-Rite i1Display OEM</text><text x="1320" y="83.7" font-size="10.6" fill="#f2f2f2" textLength="58.5" lengthAdjust="spacingAndGlyphs">TCL 65 C6KS</text>
<path d="M1457.5 88V62a4 4 0 0 1 4-4H1702.4a4 4 0 0 1 4 4V88Z" fill="url(#dd)"/><path d="M1457.5 88V62a4 4 0 0 1 4-4h1.5V88Z" fill="#12e012"/><circle cx="1690.6" cy="73" r="9.7" fill="url(#ddc)"/><path d="M1685.8999999999999 72.5h9.4l-4.7 4.7z" fill="#fff"/><text x="1466.7" y="70" font-size="10.6" fill="#f2f2f2" textLength="210.5" lengthAdjust="spacingAndGlyphs">Unified Pattern Generator Control Interface</text>
<path d="M1713 88V62a4 4 0 0 1 4-4H1852a4 4 0 0 1 4 4V88Z" fill="url(#dd)"/><path d="M1713 88V62a4 4 0 0 1 4-4h1.5V88Z" fill="#ecec00"/><circle cx="1840" cy="73" r="9.7" fill="url(#ddc)"/><path d="M1835.3 72.5h9.4l-4.7 4.7z" fill="#fff"/><text x="1722" y="70" font-size="10.6" fill="#f2f2f2" textLength="105" lengthAdjust="spacingAndGlyphs">Direct Display Control</text>
<rect x="1859.5" y="58.5" width="33" height="27.5" rx="4" fill="url(#gb)" stroke="#d4d4d4" stroke-width="1"/>
<circle cx="1876" cy="72" r="9.7" fill="url(#gbc)"/>
<g transform="translate(1876,72)" fill="#dcdcdc"><rect x="-1.3" y="-6.7" width="2.6" height="3" transform="rotate(0)"/><rect x="-1.3" y="-6.7" width="2.6" height="3" transform="rotate(45)"/><rect x="-1.3" y="-6.7" width="2.6" height="3" transform="rotate(90)"/><rect x="-1.3" y="-6.7" width="2.6" height="3" transform="rotate(135)"/><rect x="-1.3" y="-6.7" width="2.6" height="3" transform="rotate(180)"/><rect x="-1.3" y="-6.7" width="2.6" height="3" transform="rotate(225)"/><rect x="-1.3" y="-6.7" width="2.6" height="3" transform="rotate(270)"/><rect x="-1.3" y="-6.7" width="2.6" height="3" transform="rotate(315)"/><circle r="4" fill="none" stroke="#dcdcdc" stroke-width="1.9"/></g>
<path d="M1925 58.5H1898.5a4 4 0 0 0-4 4V82a4 4 0 0 0 4 4H1925Z" fill="url(#gb)" stroke="#d4d4d4" stroke-width="1"/>
<circle cx="1907" cy="72" r="9.7" fill="url(#gbc)"/><path d="M1910 66.5v11l-6.5-5.5z" fill="#fff"/>
<rect x="12" y="592.7" width="1891.5" height="1.6" fill="url(#sep)"/>
<rect x="1783.5" y="1019.5" width="134" height="28" fill="url(#sb)" stroke="#2a2a2a" stroke-width="1"/>
<rect x="1783.5" y="1049.5" width="134" height="28.5" fill="url(#sb)" stroke="#2a2a2a" stroke-width="1"/>
<text x="1850.5" y="1040" font-size="16.5" fill="#f4f4f4" text-anchor="middle" textLength="59" lengthAdjust="spacingAndGlyphs">SDR Cal</text>
<text x="1850.5" y="1071" font-size="16.5" fill="#f4f4f4" text-anchor="middle" textLength="76" lengthAdjust="spacingAndGlyphs">Save Data</text>
<path d="M1782.5 1049H1650a4 4 0 0 0-4 4V1074a4 4 0 0 0 4 4H1782.5Z" fill="url(#bk)"/>
<circle cx="1676.8" cy="1064" r="10" fill="url(#bkc)"/>
<path d="M1675.5 1059.5l-4 4.5 4 4.5M1680.5 1059.5l-4 4.5 4 4.5" stroke="#333" stroke-width="1.7" fill="none"/>
<text x="1703.5" y="1072" font-size="23.5" fill="#2e2e2e" textLength="50.5" lengthAdjust="spacingAndGlyphs">Back</text>
<text x="18.5" y="157.3" font-size="56" fill="#f0f0f0" textLength="547" lengthAdjust="spacingAndGlyphs">Pre/Post Comparison</text>
<text x="1059" y="120" font-size="17.8" fill="#f0f0f0" textLength="424" lengthAdjust="spacingAndGlyphs">Pre (top) and Post (bottom) calibration information.</text>
<text x="1059" y="144.5" font-size="17.8" fill="#f0f0f0" textLength="361" lengthAdjust="spacingAndGlyphs">Click Save Data to complete this calibration.</text>
<rect x="61" y="218" width="880" height="173" fill="#232323"/><path d="M54 218H61" stroke="#d8d8d8" stroke-width="1.5"/><text x="54.5" y="223.6" font-size="16.4" fill="#e0e0e0" text-anchor="end">110</text><path d="M61 261.2H941" stroke="#9c9c9c" stroke-width="1.2"/><path d="M54 261.2H61" stroke="#d8d8d8" stroke-width="1.5"/><text x="54.5" y="266.9" font-size="16.4" fill="#e0e0e0" text-anchor="end">105</text><path d="M61 304.5H941" stroke="#9c9c9c" stroke-width="1.2"/><path d="M54 304.5H61" stroke="#d8d8d8" stroke-width="1.5"/><text x="54.5" y="310.1" font-size="16.4" fill="#e0e0e0" text-anchor="end">100</text><path d="M61 347.8H941" stroke="#9c9c9c" stroke-width="1.2"/><path d="M54 347.8H61" stroke="#d8d8d8" stroke-width="1.5"/><text x="54.5" y="353.4" font-size="16.4" fill="#e0e0e0" text-anchor="end">95</text><path d="M54 391H61" stroke="#d8d8d8" stroke-width="1.5"/><text x="54.5" y="396.6" font-size="16.4" fill="#e0e0e0" text-anchor="end">90</text><clipPath id="cp218"><rect x="61" y="218" width="880" height="173"/></clipPath><g clip-path="url(#cp218)" fill="none" stroke-width="3" stroke-linejoin="miter"><polyline points="61,304 105,304.8 149,304 193,300.8 237,294.2 281,274.2 325,271.2 369,276.8 413,287 457,281.5 501,276.8 545,274.5 589,276.8 633,272.5 677,310.2 721,310.6 765,310.9 809,311.1 853,311.3 897,311.5 941,310" stroke="#ff0000"/><polyline points="61,304 105,304.8 149,304.2 193,302 237,298 281,280.5 325,278 369,282.5 413,293.5 457,288 501,281.2 545,278 589,276.8 633,268.2 677,306.2 721,306.7 765,307 809,307.4 853,307.8 897,308.5 941,305.2" stroke="#008000"/><polyline points="61,304 105,304.8 149,304 193,298.8 237,290.8 281,268 325,262.8 369,264 413,272.5 457,267 501,257.5 545,245.5 589,242 633,227.5 677,262 721,262.5 765,262.5 809,262.6 853,262.8 897,263 941,261.2" stroke="#0000ff"/></g><rect x="61" y="218" width="880" height="173" fill="none" stroke="#9c9c9c" stroke-width="1.6"/><text x="484" y="212.3" font-size="15.8" fill="#e0e0e0" text-anchor="middle" textLength="94.5" lengthAdjust="spacingAndGlyphs">RGB Balance</text><rect x="52" y="442" width="889" height="113.5" fill="#232323"/><path d="M52 481H941" stroke="#9c9c9c" stroke-width="1.3"/><rect x="140.6" y="553.6" width="34.4" height="1.9" fill="#000"/><rect x="183" y="547.5" width="34.4" height="8" fill="#000"/><rect x="184.8" y="549.3" width="30.8" height="6.2" fill="rgb(38,38,38)"/><rect x="184.8" y="549.3" width="30.8" height="6.2" fill="url(#bg1)"/><rect x="225.3" y="538.1" width="34.4" height="17.4" fill="#000"/><rect x="227.1" y="539.9" width="30.8" height="15.6" fill="rgb(51,51,51)"/><rect x="227.1" y="539.9" width="30.8" height="15.6" fill="url(#bg1)"/><rect x="267.6" y="525.7" width="34.4" height="29.8" fill="#000"/><rect x="269.4" y="527.5" width="30.8" height="28" fill="rgb(64,64,64)"/><rect x="269.4" y="527.5" width="30.8" height="28" fill="url(#bg1)"/><rect x="310" y="522.3" width="34.4" height="33.2" fill="#000"/><rect x="311.8" y="524.1" width="30.8" height="31.4" fill="rgb(76,76,76)"/><rect x="311.8" y="524.1" width="30.8" height="31.4" fill="url(#bg1)"/><rect x="352.3" y="519.3" width="34.4" height="36.2" fill="#000"/><rect x="354.1" y="521.1" width="30.8" height="34.4" fill="rgb(89,89,89)"/><rect x="354.1" y="521.1" width="30.8" height="34.4" fill="url(#bg1)"/><rect x="394.6" y="517.4" width="34.4" height="38.1" fill="#000"/><rect x="396.4" y="519.2" width="30.8" height="36.3" fill="rgb(102,102,102)"/><rect x="396.4" y="519.2" width="30.8" height="36.3" fill="url(#bg1)"/><rect x="437" y="516.2" width="34.4" height="39.3" fill="#000"/><rect x="438.8" y="518" width="30.8" height="37.5" fill="rgb(115,115,115)"/><rect x="438.8" y="518" width="30.8" height="37.5" fill="url(#bg1)"/><rect x="479.3" y="511.7" width="34.4" height="43.8" fill="#000"/><rect x="481.1" y="513.5" width="30.8" height="42" fill="rgb(128,128,128)"/><rect x="481.1" y="513.5" width="30.8" height="42" fill="url(#bg1)"/><rect x="521.6" y="505.7" width="34.4" height="49.8" fill="#000"/><rect x="523.4" y="507.5" width="30.8" height="48" fill="rgb(140,140,140)"/><rect x="523.4" y="507.5" width="30.8" height="48" fill="url(#bg1)"/><rect x="564" y="505.7" width="34.4" height="49.8" fill="#000"/><rect x="565.8" y="507.5" width="30.8" height="48" fill="rgb(153,153,153)"/><rect x="565.8" y="507.5" width="30.8" height="48" fill="url(#bg1)"/><rect x="606.3" y="500.8" width="34.4" height="54.7" fill="#000"/><rect x="608.1" y="502.6" width="30.8" height="52.9" fill="rgb(166,166,166)"/><rect x="608.1" y="502.6" width="30.8" height="52.9" fill="url(#bg1)"/><rect x="648.6" y="498.9" width="34.4" height="56.6" fill="#000"/><rect x="650.4" y="500.7" width="30.8" height="54.8" fill="rgb(178,178,178)"/><rect x="650.4" y="500.7" width="30.8" height="54.8" fill="url(#bg1)"/><rect x="691" y="498.9" width="34.4" height="56.6" fill="#000"/><rect x="692.8" y="500.7" width="30.8" height="54.8" fill="rgb(191,191,191)"/><rect x="692.8" y="500.7" width="30.8" height="54.8" fill="url(#bg1)"/><rect x="733.3" y="498.9" width="34.4" height="56.6" fill="#000"/><rect x="735.1" y="500.7" width="30.8" height="54.8" fill="rgb(204,204,204)"/><rect x="735.1" y="500.7" width="30.8" height="54.8" fill="url(#bg1)"/><rect x="775.6" y="498.9" width="34.4" height="56.6" fill="#000"/><rect x="777.4" y="500.7" width="30.8" height="54.8" fill="rgb(217,217,217)"/><rect x="777.4" y="500.7" width="30.8" height="54.8" fill="url(#bg1)"/><rect x="818" y="498.9" width="34.4" height="56.6" fill="#000"/><rect x="819.8" y="500.7" width="30.8" height="54.8" fill="rgb(230,230,230)"/><rect x="819.8" y="500.7" width="30.8" height="54.8" fill="url(#bg1)"/><rect x="860.3" y="497.5" width="34.4" height="58" fill="#000"/><rect x="862.1" y="499.3" width="30.8" height="56.2" fill="rgb(242,242,242)"/><rect x="862.1" y="499.3" width="30.8" height="56.2" fill="url(#bg1)"/><rect x="902.6" y="500.8" width="34.4" height="54.7" fill="#000"/><rect x="904.4" y="502.6" width="30.8" height="52.9" fill="rgb(255,255,255)"/><rect x="904.4" y="502.6" width="30.8" height="52.9" fill="url(#bg1)"/><path d="M52 479H941" stroke="#e81010" stroke-width="2"/><path d="M52 532.9H941" stroke="#ffff00" stroke-width="1.6"/><path d="M52 548H941" stroke="#008000" stroke-width="1.6"/><path d="M52 555.5V442H941V555.5" fill="none" stroke="#9c9c9c" stroke-width="1.6"/><path d="M52 555.5H941" stroke="#b4b4b4" stroke-width="1.6"/><path d="M44 481H52" stroke="#d8d8d8" stroke-width="1.5"/><text x="44" y="486.8" font-size="16.4" fill="#e0e0e0" text-anchor="end">10</text><path d="M44 555.5H52" stroke="#d8d8d8" stroke-width="1.5"/><text x="44" y="561.3" font-size="16.4" fill="#e0e0e0" text-anchor="end">0</text><path d="M52 555.5v6.5" stroke="#d4d4d4" stroke-width="1.5"/><path d="M94 555.5v6.5" stroke="#d4d4d4" stroke-width="1.5"/><path d="M137 555.5v6.5" stroke="#d4d4d4" stroke-width="1.5"/><path d="M179 555.5v6.5" stroke="#d4d4d4" stroke-width="1.5"/><path d="M221 555.5v6.5" stroke="#d4d4d4" stroke-width="1.5"/><path d="M264 555.5v6.5" stroke="#d4d4d4" stroke-width="1.5"/><path d="M306 555.5v6.5" stroke="#d4d4d4" stroke-width="1.5"/><path d="M348 555.5v6.5" stroke="#d4d4d4" stroke-width="1.5"/><path d="M391 555.5v6.5" stroke="#d4d4d4" stroke-width="1.5"/><path d="M433 555.5v6.5" stroke="#d4d4d4" stroke-width="1.5"/><path d="M475 555.5v6.5" stroke="#d4d4d4" stroke-width="1.5"/><path d="M518 555.5v6.5" stroke="#d4d4d4" stroke-width="1.5"/><path d="M560 555.5v6.5" stroke="#d4d4d4" stroke-width="1.5"/><path d="M602 555.5v6.5" stroke="#d4d4d4" stroke-width="1.5"/><path d="M645 555.5v6.5" stroke="#d4d4d4" stroke-width="1.5"/><path d="M687 555.5v6.5" stroke="#d4d4d4" stroke-width="1.5"/><path d="M729 555.5v6.5" stroke="#d4d4d4" stroke-width="1.5"/><path d="M772 555.5v6.5" stroke="#d4d4d4" stroke-width="1.5"/><path d="M814 555.5v6.5" stroke="#d4d4d4" stroke-width="1.5"/><path d="M856 555.5v6.5" stroke="#d4d4d4" stroke-width="1.5"/><path d="M899 555.5v6.5" stroke="#d4d4d4" stroke-width="1.5"/><path d="M941 555.5v6.5" stroke="#d4d4d4" stroke-width="1.5"/><text x="73.2" y="572.8" font-size="16.4" fill="#e0e0e0" text-anchor="middle">0</text><text x="115.5" y="572.8" font-size="16.4" fill="#e0e0e0" text-anchor="middle">5</text><text x="157.8" y="572.8" font-size="16.4" fill="#e0e0e0" text-anchor="middle">10</text><text x="200.2" y="572.8" font-size="16.4" fill="#e0e0e0" text-anchor="middle">15</text><text x="242.5" y="572.8" font-size="16.4" fill="#e0e0e0" text-anchor="middle">20</text><text x="284.8" y="572.8" font-size="16.4" fill="#e0e0e0" text-anchor="middle">25</text><text x="327.2" y="572.8" font-size="16.4" fill="#e0e0e0" text-anchor="middle">30</text><text x="369.5" y="572.8" font-size="16.4" fill="#e0e0e0" text-anchor="middle">35</text><text x="411.8" y="572.8" font-size="16.4" fill="#e0e0e0" text-anchor="middle">40</text><text x="454.2" y="572.8" font-size="16.4" fill="#e0e0e0" text-anchor="middle">45</text><text x="496.5" y="572.8" font-size="16.4" fill="#e0e0e0" text-anchor="middle">50</text><text x="538.8" y="572.8" font-size="16.4" fill="#e0e0e0" text-anchor="middle">55</text><text x="581.2" y="572.8" font-size="16.4" fill="#e0e0e0" text-anchor="middle">60</text><text x="623.5" y="572.8" font-size="16.4" fill="#e0e0e0" text-anchor="middle">65</text><text x="665.8" y="572.8" font-size="16.4" fill="#e0e0e0" text-anchor="middle">70</text><text x="708.2" y="572.8" font-size="16.4" fill="#e0e0e0" text-anchor="middle">75</text><text x="750.5" y="572.8" font-size="16.4" fill="#e0e0e0" text-anchor="middle">80</text><text x="792.8" y="572.8" font-size="16.4" fill="#e0e0e0" text-anchor="middle">85</text><text x="835.2" y="572.8" font-size="16.4" fill="#e0e0e0" text-anchor="middle">90</text><text x="877.5" y="572.8" font-size="16.4" fill="#e0e0e0" text-anchor="middle">95</text><text x="919.8" y="572.8" font-size="16.4" fill="#e0e0e0" text-anchor="middle">100</text><text x="101" y="439.7" font-size="16" fill="#f2f2f2" textLength="61" lengthAdjust="spacingAndGlyphs">Avg: 5.3</text><text x="827" y="439.7" font-size="16" fill="#f2f2f2" textLength="65.5" lengthAdjust="spacingAndGlyphs">Max: 7.6</text><text x="484" y="436" font-size="16" fill="#e0e0e0" text-anchor="middle" textLength="90" lengthAdjust="spacingAndGlyphs">DeltaE 2000</text><rect x="61" y="644" width="880" height="173.5" fill="#232323"/><path d="M54 644H61" stroke="#d8d8d8" stroke-width="1.5"/><text x="54.5" y="649.6" font-size="16.4" fill="#e0e0e0" text-anchor="end">105</text><path d="M61 730.8H941" stroke="#9c9c9c" stroke-width="1.2"/><path d="M54 730.8H61" stroke="#d8d8d8" stroke-width="1.5"/><text x="54.5" y="736.4" font-size="16.4" fill="#e0e0e0" text-anchor="end">100</text><path d="M54 817.5H61" stroke="#d8d8d8" stroke-width="1.5"/><text x="54.5" y="823.1" font-size="16.4" fill="#e0e0e0" text-anchor="end">95</text><clipPath id="cp644"><rect x="61" y="644" width="880" height="173.5"/></clipPath><g clip-path="url(#cp644)" fill="none" stroke-width="3" stroke-linejoin="miter"><polyline points="61,730 105,730.8 149,733.2 193,735 237,735 281,711.2 325,702.5 369,711.2 413,731.2 457,722.5 501,705.5 545,708 589,711.2 633,697 677,731.2 721,731.8 765,732.3 809,732.8 853,734 897,733 941,733" stroke="#ff0000"/><polyline points="61,730 105,730.8 149,732.5 193,733 237,732.5 281,714.2 325,706.5 369,716.2 413,738.5 457,731.2 501,712.5 545,712.5 589,713 633,690 677,729 721,729.5 765,730 809,730.5 853,731.5 897,730.8 941,728" stroke="#008000"/><polyline points="61,730 105,730.8 149,730.2 193,730.2 237,729.5 281,708.2 325,704.2 369,713 413,733.8 457,729.5 501,720.5 545,718.2 589,715.5 633,699.5 677,735 721,735.3 765,735.6 809,735.9 853,737 897,736.8 941,736.5" stroke="#0000ff"/></g><rect x="61" y="644" width="880" height="173.5" fill="none" stroke="#9c9c9c" stroke-width="1.6"/><text x="484" y="638.2" font-size="15.8" fill="#e0e0e0" text-anchor="middle" textLength="94.5" lengthAdjust="spacingAndGlyphs">RGB Balance</text><rect x="52" y="868" width="889" height="113.29999999999995" fill="#232323"/><path d="M52 907H941" stroke="#9c9c9c" stroke-width="1.3"/><rect x="183" y="978.3" width="34.4" height="3" fill="#000"/><rect x="184.8" y="980.1" width="30.8" height="1.2" fill="rgb(38,38,38)"/><rect x="184.8" y="980.1" width="30.8" height="1.2" fill="url(#bg2)"/><rect x="225.3" y="978.3" width="34.4" height="3" fill="#000"/><rect x="227.1" y="980.1" width="30.8" height="1.2" fill="rgb(51,51,51)"/><rect x="227.1" y="980.1" width="30.8" height="1.2" fill="url(#bg2)"/><rect x="267.6" y="976.4" width="34.4" height="4.9" fill="#000"/><rect x="269.4" y="978.2" width="30.8" height="3.1" fill="rgb(64,64,64)"/><rect x="269.4" y="978.2" width="30.8" height="3.1" fill="url(#bg2)"/><rect x="310" y="972.3" width="34.4" height="9" fill="#000"/><rect x="311.8" y="974.1" width="30.8" height="7.2" fill="rgb(76,76,76)"/><rect x="311.8" y="974.1" width="30.8" height="7.2" fill="url(#bg2)"/><rect x="352.3" y="974.5" width="34.4" height="6.8" fill="#000"/><rect x="354.1" y="976.3" width="30.8" height="5" fill="rgb(89,89,89)"/><rect x="354.1" y="976.3" width="30.8" height="5" fill="url(#bg2)"/><rect x="394.6" y="972.3" width="34.4" height="9" fill="#000"/><rect x="396.4" y="974.1" width="30.8" height="7.2" fill="rgb(102,102,102)"/><rect x="396.4" y="974.1" width="30.8" height="7.2" fill="url(#bg2)"/><rect x="437" y="972.3" width="34.4" height="9" fill="#000"/><rect x="438.8" y="974.1" width="30.8" height="7.2" fill="rgb(115,115,115)"/><rect x="438.8" y="974.1" width="30.8" height="7.2" fill="url(#bg2)"/><rect x="479.3" y="970.4" width="34.4" height="10.9" fill="#000"/><rect x="481.1" y="972.2" width="30.8" height="9.1" fill="rgb(128,128,128)"/><rect x="481.1" y="972.2" width="30.8" height="9.1" fill="url(#bg2)"/><rect x="521.6" y="973.8" width="34.4" height="7.5" fill="#000"/><rect x="523.4" y="975.6" width="30.8" height="5.7" fill="rgb(140,140,140)"/><rect x="523.4" y="975.6" width="30.8" height="5.7" fill="url(#bg2)"/><rect x="564" y="975.7" width="34.4" height="5.6" fill="#000"/><rect x="565.8" y="977.5" width="30.8" height="3.8" fill="rgb(153,153,153)"/><rect x="565.8" y="977.5" width="30.8" height="3.8" fill="url(#bg2)"/><rect x="606.3" y="965.5" width="34.4" height="15.8" fill="#000"/><rect x="608.1" y="967.3" width="30.8" height="14" fill="rgb(166,166,166)"/><rect x="608.1" y="967.3" width="30.8" height="14" fill="url(#bg2)"/><rect x="648.6" y="976.8" width="34.4" height="4.5" fill="#000"/><rect x="650.4" y="978.6" width="30.8" height="2.7" fill="rgb(178,178,178)"/><rect x="650.4" y="978.6" width="30.8" height="2.7" fill="url(#bg2)"/><rect x="691" y="976" width="34.4" height="5.3" fill="#000"/><rect x="692.8" y="977.8" width="30.8" height="3.5" fill="rgb(191,191,191)"/><rect x="692.8" y="977.8" width="30.8" height="3.5" fill="url(#bg2)"/><rect x="733.3" y="976.8" width="34.4" height="4.5" fill="#000"/><rect x="735.1" y="978.6" width="30.8" height="2.7" fill="rgb(204,204,204)"/><rect x="735.1" y="978.6" width="30.8" height="2.7" fill="url(#bg2)"/><rect x="775.6" y="976" width="34.4" height="5.3" fill="#000"/><rect x="777.4" y="977.8" width="30.8" height="3.5" fill="rgb(217,217,217)"/><rect x="777.4" y="977.8" width="30.8" height="3.5" fill="url(#bg2)"/><rect x="818" y="976.8" width="34.4" height="4.5" fill="#000"/><rect x="819.8" y="978.6" width="30.8" height="2.7" fill="rgb(230,230,230)"/><rect x="819.8" y="978.6" width="30.8" height="2.7" fill="url(#bg2)"/><rect x="860.3" y="976.8" width="34.4" height="4.5" fill="#000"/><rect x="862.1" y="978.6" width="30.8" height="2.7" fill="rgb(242,242,242)"/><rect x="862.1" y="978.6" width="30.8" height="2.7" fill="url(#bg2)"/><rect x="902.6" y="972.6" width="34.4" height="8.7" fill="#000"/><rect x="904.4" y="974.4" width="30.8" height="6.9" fill="rgb(255,255,255)"/><rect x="904.4" y="974.4" width="30.8" height="6.9" fill="url(#bg2)"/><path d="M52 905H941" stroke="#e81010" stroke-width="2"/><path d="M52 958.7H941" stroke="#ffff00" stroke-width="1.6"/><path d="M52 973.8H941" stroke="#008000" stroke-width="1.6"/><path d="M52 981.3V868H941V981.3" fill="none" stroke="#9c9c9c" stroke-width="1.6"/><path d="M52 981.3H941" stroke="#b4b4b4" stroke-width="1.6"/><path d="M44 907H52" stroke="#d8d8d8" stroke-width="1.5"/><text x="44" y="912.8" font-size="16.4" fill="#e0e0e0" text-anchor="end">10</text><path d="M44 981.3H52" stroke="#d8d8d8" stroke-width="1.5"/><text x="44" y="987.1" font-size="16.4" fill="#e0e0e0" text-anchor="end">0</text><path d="M52 981.3v6.5" stroke="#d4d4d4" stroke-width="1.5"/><path d="M94 981.3v6.5" stroke="#d4d4d4" stroke-width="1.5"/><path d="M137 981.3v6.5" stroke="#d4d4d4" stroke-width="1.5"/><path d="M179 981.3v6.5" stroke="#d4d4d4" stroke-width="1.5"/><path d="M221 981.3v6.5" stroke="#d4d4d4" stroke-width="1.5"/><path d="M264 981.3v6.5" stroke="#d4d4d4" stroke-width="1.5"/><path d="M306 981.3v6.5" stroke="#d4d4d4" stroke-width="1.5"/><path d="M348 981.3v6.5" stroke="#d4d4d4" stroke-width="1.5"/><path d="M391 981.3v6.5" stroke="#d4d4d4" stroke-width="1.5"/><path d="M433 981.3v6.5" stroke="#d4d4d4" stroke-width="1.5"/><path d="M475 981.3v6.5" stroke="#d4d4d4" stroke-width="1.5"/><path d="M518 981.3v6.5" stroke="#d4d4d4" stroke-width="1.5"/><path d="M560 981.3v6.5" stroke="#d4d4d4" stroke-width="1.5"/><path d="M602 981.3v6.5" stroke="#d4d4d4" stroke-width="1.5"/><path d="M645 981.3v6.5" stroke="#d4d4d4" stroke-width="1.5"/><path d="M687 981.3v6.5" stroke="#d4d4d4" stroke-width="1.5"/><path d="M729 981.3v6.5" stroke="#d4d4d4" stroke-width="1.5"/><path d="M772 981.3v6.5" stroke="#d4d4d4" stroke-width="1.5"/><path d="M814 981.3v6.5" stroke="#d4d4d4" stroke-width="1.5"/><path d="M856 981.3v6.5" stroke="#d4d4d4" stroke-width="1.5"/><path d="M899 981.3v6.5" stroke="#d4d4d4" stroke-width="1.5"/><path d="M941 981.3v6.5" stroke="#d4d4d4" stroke-width="1.5"/><text x="73.2" y="998.6" font-size="16.4" fill="#e0e0e0" text-anchor="middle">0</text><text x="115.5" y="998.6" font-size="16.4" fill="#e0e0e0" text-anchor="middle">5</text><text x="157.8" y="998.6" font-size="16.4" fill="#e0e0e0" text-anchor="middle">10</text><text x="200.2" y="998.6" font-size="16.4" fill="#e0e0e0" text-anchor="middle">15</text><text x="242.5" y="998.6" font-size="16.4" fill="#e0e0e0" text-anchor="middle">20</text><text x="284.8" y="998.6" font-size="16.4" fill="#e0e0e0" text-anchor="middle">25</text><text x="327.2" y="998.6" font-size="16.4" fill="#e0e0e0" text-anchor="middle">30</text><text x="369.5" y="998.6" font-size="16.4" fill="#e0e0e0" text-anchor="middle">35</text><text x="411.8" y="998.6" font-size="16.4" fill="#e0e0e0" text-anchor="middle">40</text><text x="454.2" y="998.6" font-size="16.4" fill="#e0e0e0" text-anchor="middle">45</text><text x="496.5" y="998.6" font-size="16.4" fill="#e0e0e0" text-anchor="middle">50</text><text x="538.8" y="998.6" font-size="16.4" fill="#e0e0e0" text-anchor="middle">55</text><text x="581.2" y="998.6" font-size="16.4" fill="#e0e0e0" text-anchor="middle">60</text><text x="623.5" y="998.6" font-size="16.4" fill="#e0e0e0" text-anchor="middle">65</text><text x="665.8" y="998.6" font-size="16.4" fill="#e0e0e0" text-anchor="middle">70</text><text x="708.2" y="998.6" font-size="16.4" fill="#e0e0e0" text-anchor="middle">75</text><text x="750.5" y="998.6" font-size="16.4" fill="#e0e0e0" text-anchor="middle">80</text><text x="792.8" y="998.6" font-size="16.4" fill="#e0e0e0" text-anchor="middle">85</text><text x="835.2" y="998.6" font-size="16.4" fill="#e0e0e0" text-anchor="middle">90</text><text x="877.5" y="998.6" font-size="16.4" fill="#e0e0e0" text-anchor="middle">95</text><text x="919.8" y="998.6" font-size="16.4" fill="#e0e0e0" text-anchor="middle">100</text><text x="101" y="865.7" font-size="16" fill="#f2f2f2" textLength="61" lengthAdjust="spacingAndGlyphs">Avg: 0.9</text><text x="827" y="865.7" font-size="16" fill="#f2f2f2" textLength="65.5" lengthAdjust="spacingAndGlyphs">Max: 2.1</text><text x="484" y="862" font-size="16" fill="#e0e0e0" text-anchor="middle" textLength="90" lengthAdjust="spacingAndGlyphs">DeltaE 2000</text>
<rect x="1200" y="218" width="229.5" height="330.1" fill="#232323"/><path d="M1193 220.9h7M1193 223.8h7M1193 226.7h7M1193 229.6h7M1193 232.5h7M1193 235.4h7M1193 238.3h7M1193 241.2h7M1193 244.1h7M1193 247h7M1193 249.9h7M1193 252.8h7M1193 255.7h7M1193 258.6h7M1193 261.5h7M1193 264.4h7M1193 267.3h7M1193 270.2h7M1193 273.1h7M1193 276h7M1193 278.9h7M1193 281.8h7M1193 284.7h7M1193 287.6h7M1193 290.5h7M1193 293.4h7M1193 296.3h7M1193 299.2h7M1193 302.1h7M1193 305h7M1193 307.9h7M1193 310.8h7M1193 313.7h7M1193 316.6h7M1193 319.5h7M1193 322.4h7M1193 325.3h7M1193 328.2h7M1193 331.1h7M1193 334h7M1193 336.9h7M1193 339.8h7M1193 342.7h7M1193 345.6h7M1193 348.5h7M1193 351.4h7M1193 354.3h7M1193 357.2h7M1193 360.1h7M1193 363h7M1193 365.9h7M1193 368.9h7M1193 371.8h7M1193 374.7h7M1193 377.6h7M1193 380.5h7M1193 383.4h7M1193 386.3h7M1193 389.2h7M1193 392.1h7M1193 395h7M1193 397.9h7M1193 400.8h7M1193 403.7h7M1193 406.6h7M1193 409.5h7M1193 412.4h7M1193 415.3h7M1193 418.2h7M1193 421.1h7M1193 424h7M1193 426.9h7M1193 429.8h7M1193 432.7h7M1193 435.6h7M1193 438.5h7M1193 441.4h7M1193 444.3h7M1193 447.2h7M1193 450.1h7M1193 453h7M1193 455.9h7M1193 458.8h7M1193 461.7h7M1193 464.6h7M1193 467.5h7M1193 470.4h7M1193 473.3h7M1193 476.2h7M1193 479.1h7M1193 482h7M1193 484.9h7M1193 487.8h7M1193 490.7h7M1193 493.6h7M1193 496.5h7M1193 499.4h7M1193 502.3h7M1193 505.2h7M1193 508.1h7M1193 511h7M1193 513.9h7M1193 516.8h7M1193 519.7h7M1193 522.6h7M1193 525.5h7M1193 528.4h7M1193 531.3h7M1193 534.2h7M1193 537.1h7M1193 540h7M1193 542.9h7M1193 545.8h7M1193 218.3h7" stroke="#f4f4f4" stroke-width="1.7" fill="none"/><path d="M1200.5 220.9H1228.8M1200.5 223.8H1220.9M1200.5 226.7H1264M1200.5 229.6H1237.9M1200.5 232.5H1225.5M1200.5 235.4H1233M1200.5 238.3H1277.4M1200.5 241.2H1218M1200.5 244.1H1262.9M1200.5 247H1256.7M1200.5 249.9H1213M1200.5 252.8H1233M1200.5 255.7H1244.2M1200.5 258.6H1257.9M1200.5 261.5H1248.8M1200.5 264.4H1251.9M1200.5 267.3H1253.6M1200.5 270.2H1264M1200.5 273.1H1255M1200.5 276H1299.7M1200.5 278.9H1308.6M1200.5 281.8H1271.6M1200.5 284.7H1251.9M1200.5 287.6H1257.9M1200.5 290.5H1259.8M1200.5 293.4H1253.6M1200.5 296.3H1255M1200.5 299.2H1256.7M1200.5 302.1H1259.8M1200.5 305H1262.9M1200.5 307.9H1299.7M1200.5 310.8H1237.9M1200.5 313.7H1274.8M1200.5 316.6H1269M1200.5 319.5H1249.8M1200.5 322.4H1256.7M1200.5 325.3H1314.7M1200.5 328.2H1253.3M1200.5 331.1H1257.9M1200.5 334H1293.7M1200.5 336.9H1266.8M1200.5 339.8H1308.6M1200.5 342.7H1311.7M1200.5 345.6H1244.2M1200.5 348.5H1256.7M1200.5 351.4H1266.8M1200.5 354.3H1318.4M1200.5 357.2H1253.3M1200.5 360.1H1265.8M1200.5 363H1244.2M1200.5 365.9H1237.9M1200.5 368.9H1270.4M1200.5 371.8H1274.8M1200.5 374.7H1282.9M1200.5 377.6H1235.9M1200.5 380.5H1229.9M1200.5 383.4H1248.8M1200.5 386.3H1269M1200.5 389.2H1269M1200.5 392.1H1222.6M1200.5 395H1239.6M1200.5 397.9H1249.8M1200.5 400.8H1256.7M1200.5 403.7H1270.4M1200.5 406.6H1269M1200.5 409.5H1237.9M1200.5 412.4H1251.9M1200.5 415.3H1248.8M1200.5 418.2H1218.8M1200.5 421.1H1266.8M1200.5 424H1282.9M1200.5 426.9H1248.8M1200.5 429.8H1233M1200.5 432.7H1290.8M1200.5 435.6H1255M1200.5 438.5H1244.2M1200.5 441.4H1276.2M1200.5 444.3H1248.8M1200.5 447.2H1244.2M1200.5 450.1H1308.6M1200.5 453H1251.9M1200.5 455.9H1255M1200.5 458.8H1244.2M1200.5 461.7H1253.3M1200.5 464.6H1248.8M1200.5 467.5H1260.8M1200.5 470.4H1233M1200.5 473.3H1239.6M1200.5 476.2H1255M1200.5 479.1H1253.3M1200.5 482H1266.8M1200.5 484.9H1301.2M1200.5 487.8H1242.5M1200.5 490.7H1240.9M1200.5 493.6H1287.4M1200.5 496.5H1248.8M1200.5 499.4H1239.6M1200.5 502.3H1277.4M1200.5 505.2H1264M1200.5 508.1H1266.8M1200.5 511H1273.3M1200.5 513.9H1276.2M1200.5 516.8H1265.8M1200.5 519.7H1228.8M1200.5 522.6H1282.9M1200.5 525.5H1279.8M1200.5 528.4H1270.4M1200.5 531.3H1246.7M1200.5 534.2H1277.4M1200.5 537.1H1279.8M1200.5 540H1283.9M1200.5 542.9H1287.4M1200.5 545.8H1314.9" stroke="#000" stroke-width="1.9" fill="none"/><path d="M1275.9 218V548.1" stroke="#9c9c9c" stroke-width="1.5"/><path d="M1272.9 238.3H1277.4M1272.9 276H1299.7M1272.9 278.9H1308.6M1272.9 307.9H1299.7M1272.9 313.7H1274.8M1272.9 325.3H1314.7M1272.9 334H1293.7M1272.9 339.8H1308.6M1272.9 342.7H1311.7M1272.9 354.3H1318.4M1272.9 371.8H1274.8M1272.9 374.7H1282.9M1272.9 424H1282.9M1272.9 432.7H1290.8M1272.9 441.4H1276.2M1272.9 450.1H1308.6M1272.9 484.9H1301.2M1272.9 493.6H1287.4M1272.9 502.3H1277.4M1272.9 513.9H1276.2M1272.9 522.6H1282.9M1272.9 525.5H1279.8M1272.9 534.2H1277.4M1272.9 537.1H1279.8M1272.9 540H1283.9M1272.9 542.9H1287.4M1272.9 545.8H1314.9" stroke="#000" stroke-width="1.9" fill="none"/><path d="M1200.2 548.1V218H1429.3V548.1" fill="none" stroke="#9c9c9c" stroke-width="1.4"/><path d="M1214.6 218V548.1" stroke="#008000" stroke-width="1.5"/><path d="M1245.2 218V548.1" stroke="#f4f400" stroke-width="1.8"/><path d="M1351.2 218V548.1" stroke="#9c9c9c" stroke-width="1.2"/><path d="M1352.9 218V548.1" stroke="#f01010" stroke-width="2.2"/><path d="M1426.8 218V548.1" stroke="#9c9c9c" stroke-width="1.2"/><path d="M1193 548.1H1430" stroke="#b8b8b8" stroke-width="1.6"/><path d="M1199.8 548.1v8" stroke="#e0e0e0" stroke-width="1.6"/><text x="1199.8" y="572.4" font-size="16" fill="#dedede" text-anchor="middle">0</text><path d="M1275.9 548.1v8" stroke="#e0e0e0" stroke-width="1.6"/><text x="1275.9" y="572.4" font-size="16" fill="#dedede" text-anchor="middle">5</text><path d="M1352 548.1v8" stroke="#e0e0e0" stroke-width="1.6"/><text x="1352" y="572.4" font-size="16" fill="#dedede" text-anchor="middle">10</text><path d="M1428.1 548.1v8" stroke="#e0e0e0" stroke-width="1.6"/><text x="1428.1" y="572.4" font-size="16" fill="#dedede" text-anchor="middle">15</text><g font-size="16.5" fill="#dedede" text-anchor="end"><text x="1192.6" y="553.5">White</text><text x="1085.2" y="550.6">Gray 80</text><text x="1192.6" y="547.6">Gray 65</text><text x="1085.2" y="544.7">Gray 50</text><text x="1192.6" y="541.8">Gray 35</text><text x="1085.2" y="538.8">6K</text><text x="1192.6" y="535.9">7K</text><text x="1085.2" y="533">6J</text><text x="1192.6" y="530">5J</text><text x="1085.2" y="527.1">6I</text><text x="1192.6" y="524.2">5I</text><text x="1085.2" y="521.2">6H</text><text x="1192.6" y="518.3">5H</text><text x="1085.2" y="515.4">6G</text><text x="1192.6" y="512.4">5G</text><text x="1085.2" y="509.5">6F</text><text x="1192.6" y="506.6">Dark Skin</text><text x="1085.2" y="503.6">Light Skin</text><text x="1192.6" y="500.7">Blue Sky</text><text x="1085.2" y="497.8">Foliage</text><text x="1192.6" y="494.8">Blue Flower</text><text x="1085.2" y="491.9">Bluish Green</text><text x="1192.6" y="489">Orange</text><text x="1085.2" y="486">Purplish Blue</text><text x="1192.6" y="483.1">Moderate Red</text><text x="1085.2" y="480.2">Purple</text><text x="1192.6" y="477.3">Yellow Green</text><text x="1085.2" y="474.3">Orange Yellow</text><text x="1192.6" y="471.4">Blue</text><text x="1085.2" y="468.5">Green</text><text x="1192.6" y="465.5">Red</text><text x="1085.2" y="462.6">Yellow</text><text x="1192.6" y="459.7">Magenta</text><text x="1085.2" y="456.7">Cyan</text><text x="1192.6" y="453.8">2B</text><text x="1085.2" y="450.9">2C</text><text x="1192.6" y="447.9">2D</text><text x="1085.2" y="445">2E</text><text x="1192.6" y="442.1">2F</text><text x="1085.2" y="439.1">2G</text><text x="1192.6" y="436.2">2H</text><text x="1085.2" y="433.3">2I</text><text x="1192.6" y="430.3">2J</text><text x="1085.2" y="427.4">2K</text><text x="1192.6" y="424.5">2L</text><text x="1085.2" y="421.5">2M</text><text x="1192.6" y="418.6">3B</text><text x="1085.2" y="415.7">3C</text><text x="1192.6" y="412.7">3D</text><text x="1085.2" y="409.8">3E</text><text x="1192.6" y="406.9">3F</text><text x="1085.2" y="404">3G</text><text x="1192.6" y="401">3H</text><text x="1085.2" y="398.1">3I</text><text x="1192.6" y="395.2">3J</text><text x="1085.2" y="392.2">3K</text><text x="1192.6" y="389.3">3L</text><text x="1085.2" y="386.4">3M</text><text x="1192.6" y="383.4">4B</text><text x="1085.2" y="380.5">4C</text><text x="1192.6" y="377.6">4D</text><text x="1085.2" y="374.6">4E</text><text x="1192.6" y="371.7">4F</text><text x="1085.2" y="368.8">4G</text><text x="1192.6" y="365.8">4H</text><text x="1085.2" y="362.9">4I</text><text x="1192.6" y="360">4J</text><text x="1085.2" y="357">4K</text><text x="1192.6" y="354.1">4L</text><text x="1085.2" y="351.2">4M</text><text x="1192.6" y="348.2">5B</text><text x="1085.2" y="345.3">5C</text><text x="1192.6" y="342.4">5D</text><text x="1085.2" y="339.4">5K</text><text x="1192.6" y="336.5">5L</text><text x="1085.2" y="333.6">5M</text><text x="1192.6" y="330.7">6B</text><text x="1085.2" y="327.7">6C</text><text x="1192.6" y="324.8">6D</text><text x="1085.2" y="321.9">6L</text><text x="1192.6" y="318.9">6M</text><text x="1085.2" y="316">7B</text><text x="1192.6" y="313.1">7C</text><text x="1085.2" y="310.1">7D</text><text x="1192.6" y="307.2">7E</text><text x="1192.6" y="304.3">7F</text><text x="1085.2" y="301.3">7G</text><text x="1192.6" y="298.4">7H</text><text x="1085.2" y="295.5">7I</text><text x="1192.6" y="292.5">7L</text><text x="1085.2" y="289.6">7M</text><text x="1192.6" y="286.7">8B</text><text x="1085.2" y="283.7">8C</text><text x="1192.6" y="280.8">8D</text><text x="1085.2" y="277.9">8E</text><text x="1192.6" y="274.9">8F</text><text x="1085.2" y="272">8G</text><text x="1192.6" y="269.1">8H</text><text x="1085.2" y="266.1">8I</text><text x="1192.6" y="263.2">8L</text><text x="1085.2" y="260.3">8M</text><text x="1192.6" y="257.4">9B</text><text x="1085.2" y="254.4">9C</text><text x="1192.6" y="251.5">9D</text><text x="1085.2" y="248.6">9E</text><text x="1192.6" y="245.6">9F</text><text x="1085.2" y="242.7">9G</text><text x="1192.6" y="239.8">9H</text><text x="1085.2" y="236.8">9I</text><text x="1192.6" y="233.9">9J</text><text x="1085.2" y="231">9K</text><text x="1192.6" y="228">9L</text><text x="1085.2" y="225.1">9M</text></g><text x="1069.5" y="214.6" font-size="16" fill="#f2f2f2" textLength="60.5" lengthAdjust="spacingAndGlyphs">Avg: 3.9</text><text x="1314.3" y="214.6" font-size="16" fill="#f2f2f2" textLength="65.5" lengthAdjust="spacingAndGlyphs">Max: 7.8</text><text x="1204" y="212" font-size="16" fill="#dedede" text-anchor="middle" textLength="90" lengthAdjust="spacingAndGlyphs">DeltaE 2000</text><rect x="1200" y="643.7" width="229.5" height="330.4" fill="#232323"/><path d="M1193 646.6h7M1193 649.5h7M1193 652.4h7M1193 655.3h7M1193 658.2h7M1193 661.1h7M1193 664h7M1193 666.9h7M1193 669.8h7M1193 672.7h7M1193 675.6h7M1193 678.5h7M1193 681.4h7M1193 684.3h7M1193 687.2h7M1193 690.1h7M1193 693h7M1193 695.9h7M1193 698.8h7M1193 701.7h7M1193 704.6h7M1193 707.5h7M1193 710.4h7M1193 713.3h7M1193 716.2h7M1193 719.1h7M1193 722h7M1193 724.9h7M1193 727.8h7M1193 730.7h7M1193 733.6h7M1193 736.5h7M1193 739.4h7M1193 742.3h7M1193 745.2h7M1193 748.1h7M1193 751h7M1193 753.9h7M1193 756.8h7M1193 759.7h7M1193 762.6h7M1193 765.5h7M1193 768.4h7M1193 771.3h7M1193 774.2h7M1193 777.1h7M1193 780h7M1193 782.9h7M1193 785.8h7M1193 788.7h7M1193 791.6h7M1193 794.6h7M1193 797.5h7M1193 800.4h7M1193 803.3h7M1193 806.2h7M1193 809.1h7M1193 812h7M1193 814.9h7M1193 817.8h7M1193 820.7h7M1193 823.6h7M1193 826.5h7M1193 829.4h7M1193 832.3h7M1193 835.2h7M1193 838.1h7M1193 841h7M1193 843.9h7M1193 846.8h7M1193 849.7h7M1193 852.6h7M1193 855.5h7M1193 858.4h7M1193 861.3h7M1193 864.2h7M1193 867.1h7M1193 870h7M1193 872.9h7M1193 875.8h7M1193 878.7h7M1193 881.6h7M1193 884.5h7M1193 887.4h7M1193 890.3h7M1193 893.2h7M1193 896.1h7M1193 899h7M1193 901.9h7M1193 904.8h7M1193 907.7h7M1193 910.6h7M1193 913.5h7M1193 916.4h7M1193 919.3h7M1193 922.2h7M1193 925.1h7M1193 928h7M1193 930.9h7M1193 933.8h7M1193 936.7h7M1193 939.6h7M1193 942.5h7M1193 945.4h7M1193 948.3h7M1193 951.2h7M1193 954.1h7M1193 957h7M1193 959.9h7M1193 962.8h7M1193 965.7h7M1193 968.6h7M1193 971.5h7M1193 644h7" stroke="#f4f4f4" stroke-width="1.7" fill="none"/><path d="M1200.5 646.6H1233M1200.5 649.5H1225.7M1200.5 652.4H1266.8M1200.5 655.3H1233M1200.5 658.2H1218.8M1200.5 661.1H1220.9M1200.5 664H1259.8M1200.5 666.9H1210.1M1200.5 669.8H1248.8M1200.5 672.7H1240.9M1200.5 675.6H1234.9M1200.5 678.5H1239.6M1200.5 681.4H1248.8M1200.5 684.3H1269M1200.5 687.2H1260.8M1200.5 690.1H1265.8M1200.5 693H1269M1200.5 695.9H1269M1200.5 698.8H1265.8M1200.5 701.7H1274.8M1200.5 704.6H1271.6M1200.5 707.5H1269M1200.5 710.4H1260.8M1200.5 713.3H1266.8M1200.5 716.2H1264M1200.5 719.1H1264M1200.5 722H1265.8M1200.5 724.9H1266.8M1200.5 727.8H1265.8M1200.5 730.7H1269M1200.5 733.6H1251.9M1200.5 736.5H1233M1200.5 739.4H1265.8M1200.5 742.3H1265.8M1200.5 745.2H1228.8M1200.5 748.1H1231.9M1200.5 751H1266.8M1200.5 753.9H1260.8M1200.5 756.8H1264M1200.5 759.7H1237.9M1200.5 762.6H1255M1200.5 765.5H1264M1200.5 768.4H1277.4M1200.5 771.3H1253.3M1200.5 774.2H1255M1200.5 777.1H1233M1200.5 780H1274.8M1200.5 782.9H1244.2M1200.5 785.8H1264M1200.5 788.7H1251.9M1200.5 791.6H1225.7M1200.5 794.6H1244.2M1200.5 797.5H1233M1200.5 800.4H1242.5M1200.5 803.3H1215.9M1200.5 806.2H1229.9M1200.5 809.1H1257.9M1200.5 812H1222.6M1200.5 814.9H1265.8M1200.5 817.8H1222.6M1200.5 820.7H1211.7M1200.5 823.6H1256.7M1200.5 826.5H1234.9M1200.5 829.4H1266.8M1200.5 832.3H1246.7M1200.5 835.2H1201.9M1200.5 838.1H1237.9M1200.5 841H1249.8M1200.5 843.9H1235.9M1200.5 846.8H1264M1200.5 849.7H1251.9M1200.5 852.6H1206.9M1200.5 855.5H1211.7M1200.5 858.4H1235.9M1200.5 861.3H1270.4M1200.5 864.2H1251.9M1200.5 867.1H1215.7M1200.5 870H1211.7M1200.5 872.9H1239.6M1200.5 875.8H1273.7M1200.5 878.7H1239.6M1200.5 881.6H1248.8M1200.5 884.5H1248.8M1200.5 887.4H1239.6M1200.5 890.3H1234.9M1200.5 893.2H1259.8M1200.5 896.1H1225.7M1200.5 899H1208.4M1200.5 901.9H1253.3M1200.5 904.8H1239.6M1200.5 907.7H1269M1200.5 910.6H1262.9M1200.5 913.5H1217.7M1200.5 916.4H1213M1200.5 919.3H1242.5M1200.5 922.2H1249.8M1200.5 925.1H1244.2M1200.5 928H1206.9M1200.5 930.9H1210.1M1200.5 933.8H1213M1200.5 936.7H1213M1200.5 939.6H1217.7M1200.5 942.5H1217.7M1200.5 945.4H1213M1200.5 948.3H1213M1200.5 951.2H1222.6M1200.5 954.1H1228.8M1200.5 957H1225.7M1200.5 959.9H1223.8M1200.5 962.8H1220.9M1200.5 965.7H1218.8M1200.5 968.6H1223.8M1200.5 971.5H1213" stroke="#000" stroke-width="1.9" fill="none"/><path d="M1275.9 643.7V974.1" stroke="#9c9c9c" stroke-width="1.5"/><path d="M1272.9 701.7H1274.8M1272.9 768.4H1277.4M1272.9 780H1274.8" stroke="#000" stroke-width="1.9" fill="none"/><path d="M1200.2 974.1V643.7H1429.3V974.1" fill="none" stroke="#9c9c9c" stroke-width="1.4"/><path d="M1214.6 643.7V974.1" stroke="#008000" stroke-width="1.5"/><path d="M1245.2 643.7V974.1" stroke="#f4f400" stroke-width="1.8"/><path d="M1351.2 643.7V974.1" stroke="#9c9c9c" stroke-width="1.2"/><path d="M1352.9 643.7V974.1" stroke="#f01010" stroke-width="2.2"/><path d="M1426.8 643.7V974.1" stroke="#9c9c9c" stroke-width="1.2"/><path d="M1193 974.1H1430" stroke="#b8b8b8" stroke-width="1.6"/><path d="M1199.8 974.1v8" stroke="#e0e0e0" stroke-width="1.6"/><text x="1199.8" y="998.4" font-size="16" fill="#dedede" text-anchor="middle">0</text><path d="M1275.9 974.1v8" stroke="#e0e0e0" stroke-width="1.6"/><text x="1275.9" y="998.4" font-size="16" fill="#dedede" text-anchor="middle">5</text><path d="M1352 974.1v8" stroke="#e0e0e0" stroke-width="1.6"/><text x="1352" y="998.4" font-size="16" fill="#dedede" text-anchor="middle">10</text><path d="M1428.1 974.1v8" stroke="#e0e0e0" stroke-width="1.6"/><text x="1428.1" y="998.4" font-size="16" fill="#dedede" text-anchor="middle">15</text><g font-size="16.5" fill="#dedede" text-anchor="end"><text x="1192.6" y="979.2">White</text><text x="1085.2" y="976.3">Gray 80</text><text x="1192.6" y="973.3">6J</text><text x="1085.2" y="970.4">Gray 65</text><text x="1192.6" y="967.5">6K</text><text x="1085.2" y="964.5">Gray 50</text><text x="1192.6" y="961.6">6I</text><text x="1085.2" y="958.7">Gray 35</text><text x="1192.6" y="955.7">7K</text><text x="1085.2" y="952.8">5H</text><text x="1192.6" y="949.9">8K</text><text x="1085.2" y="946.9">6G</text><text x="1192.6" y="944">5I</text><text x="1085.2" y="941.1">6F</text><text x="1192.6" y="938.1">5J</text><text x="1085.2" y="935.2">5G</text><text x="1192.6" y="932.3">Dark Skin</text><text x="1085.2" y="929.3">Light Skin</text><text x="1192.6" y="926.4">Blue Sky</text><text x="1085.2" y="923.5">Foliage</text><text x="1192.6" y="920.5">Blue Flower</text><text x="1085.2" y="917.6">Bluish Green</text><text x="1192.6" y="914.7">Orange</text><text x="1085.2" y="911.7">Purplish Blue</text><text x="1192.6" y="908.8">Moderate Red</text><text x="1085.2" y="905.9">Purple</text><text x="1192.6" y="903">Yellow Green</text><text x="1085.2" y="900">Orange Yellow</text><text x="1192.6" y="897.1">Blue</text><text x="1085.2" y="894.2">Green</text><text x="1192.6" y="891.2">Red</text><text x="1085.2" y="888.3">Yellow</text><text x="1192.6" y="885.4">Magenta</text><text x="1085.2" y="882.4">Cyan</text><text x="1192.6" y="879.5">2B</text><text x="1085.2" y="876.6">2C</text><text x="1192.6" y="873.6">2D</text><text x="1085.2" y="870.7">2E</text><text x="1192.6" y="867.8">2F</text><text x="1085.2" y="864.8">2G</text><text x="1192.6" y="861.9">2H</text><text x="1085.2" y="859">2I</text><text x="1192.6" y="856">2J</text><text x="1085.2" y="853.1">2K</text><text x="1192.6" y="850.2">2L</text><text x="1085.2" y="847.2">2M</text><text x="1192.6" y="844.3">3B</text><text x="1085.2" y="841.4">3C</text><text x="1192.6" y="838.4">3D</text><text x="1085.2" y="835.5">3E</text><text x="1192.6" y="832.6">3F</text><text x="1085.2" y="829.7">3G</text><text x="1192.6" y="826.7">3H</text><text x="1085.2" y="823.8">3I</text><text x="1192.6" y="820.9">3J</text><text x="1085.2" y="817.9">3K</text><text x="1192.6" y="815">3L</text><text x="1085.2" y="812.1">3M</text><text x="1192.6" y="809.1">4B</text><text x="1085.2" y="806.2">4C</text><text x="1192.6" y="803.3">4D</text><text x="1085.2" y="800.3">4E</text><text x="1192.6" y="797.4">4F</text><text x="1085.2" y="794.5">4G</text><text x="1192.6" y="791.5">4H</text><text x="1085.2" y="788.6">4I</text><text x="1192.6" y="785.7">4J</text><text x="1085.2" y="782.7">4K</text><text x="1192.6" y="779.8">4L</text><text x="1085.2" y="776.9">4M</text><text x="1192.6" y="773.9">5B</text><text x="1085.2" y="771">5C</text><text x="1192.6" y="768.1">5D</text><text x="1085.2" y="765.1">5K</text><text x="1192.6" y="762.2">5L</text><text x="1085.2" y="759.3">5M</text><text x="1192.6" y="756.4">6B</text><text x="1085.2" y="753.4">6C</text><text x="1192.6" y="750.5">6D</text><text x="1085.2" y="747.6">6L</text><text x="1192.6" y="744.6">6M</text><text x="1085.2" y="741.7">7B</text><text x="1192.6" y="738.8">7C</text><text x="1085.2" y="735.8">7D</text><text x="1192.6" y="732.9">7E</text><text x="1192.6" y="730">7F</text><text x="1085.2" y="727">7G</text><text x="1192.6" y="724.1">7H</text><text x="1085.2" y="721.2">7I</text><text x="1192.6" y="718.2">7L</text><text x="1085.2" y="715.3">7M</text><text x="1192.6" y="712.4">8B</text><text x="1085.2" y="709.4">8C</text><text x="1192.6" y="706.5">8D</text><text x="1085.2" y="703.6">8E</text><text x="1192.6" y="700.6">8F</text><text x="1085.2" y="697.7">8G</text><text x="1192.6" y="694.8">8H</text><text x="1085.2" y="691.8">8I</text><text x="1192.6" y="688.9">8L</text><text x="1085.2" y="686">8M</text><text x="1192.6" y="683.1">9B</text><text x="1085.2" y="680.1">9C</text><text x="1192.6" y="677.2">9D</text><text x="1085.2" y="674.3">9E</text><text x="1192.6" y="671.3">9F</text><text x="1085.2" y="668.4">9G</text><text x="1192.6" y="665.5">9H</text><text x="1085.2" y="662.5">9I</text><text x="1192.6" y="659.6">9J</text><text x="1085.2" y="656.7">9K</text><text x="1192.6" y="653.7">9L</text><text x="1085.2" y="650.8">9M</text></g><text x="1069.5" y="640.3" font-size="16" fill="#f2f2f2" textLength="60.5" lengthAdjust="spacingAndGlyphs">Avg: 2.8</text><text x="1314.3" y="640.3" font-size="16" fill="#f2f2f2" textLength="65.5" lengthAdjust="spacingAndGlyphs">Max: 5.1</text><text x="1204" y="637.7" font-size="16" fill="#dedede" text-anchor="middle" textLength="90" lengthAdjust="spacingAndGlyphs">DeltaE 2000</text><rect x="1462.7" y="208.7" width="435" height="371.3" fill="#232323" stroke="#9c9c9c" stroke-width="1.6"/><text x="1680" y="202.7" font-size="15.8" fill="#dedede" text-anchor="middle" textLength="85" lengthAdjust="spacingAndGlyphs">CIE 1931 xy</text><rect x="1462.7" y="634.3" width="435" height="371.3" fill="#232323" stroke="#9c9c9c" stroke-width="1.6"/><text x="1680" y="628.3" font-size="15.8" fill="#dedede" text-anchor="middle" textLength="85" lengthAdjust="spacingAndGlyphs">CIE 1931 xy</text>
</svg>
<div class="cie" style="left:1464px;top:210px"><i class="r0"></i><i class="r1"></i><i class="r2"></i><i class="r3"></i><i class="r4"></i><i class="r5"></i><i class="r6"></i><i class="r7"></i><i class="r8"></i><i class="r9"></i><i class="r10"></i><i class="r11"></i><i class="r12"></i><i class="r13"></i><i class="r14"></i><i class="r15"></i><i class="r16"></i><i class="r17"></i><i class="r18"></i><i class="r19"></i><i class="r20"></i><i class="r21"></i><i class="r22"></i><i class="r23"></i><i class="r24"></i><i class="r25"></i><i class="r26"></i><i class="r27"></i><i class="r28"></i><i class="r29"></i><i class="r30"></i><i class="r31"></i><i class="r32"></i><i class="r33"></i><i class="r34"></i><i class="r35"></i><i class="r36"></i><i class="r37"></i><i class="r38"></i><i class="r39"></i><i class="r40"></i><i class="r41"></i><i class="r42"></i><i class="r43"></i><i class="r44"></i><i class="r45"></i><i class="r46"></i><i class="r47"></i><i class="r48"></i><i class="r49"></i><i class="r50"></i><i class="r51"></i><i class="r52"></i><i class="r53"></i><i class="r54"></i><i class="r55"></i><i class="r56"></i><i class="r57"></i><i class="r58"></i><i class="r59"></i><i class="r60"></i><i class="r61"></i><i class="r62"></i><i class="r63"></i><i class="r64"></i><i class="r65"></i><i class="r66"></i><i class="r67"></i><i class="r68"></i><i class="r69"></i><i class="r70"></i><i class="r71"></i><i class="r72"></i><i class="r73"></i><i class="r74"></i><i class="r75"></i><i class="r76"></i><i class="r77"></i><i class="r78"></i><i class="r79"></i><i class="r80"></i><i class="r81"></i><i class="r82"></i><i class="r83"></i><i class="r84"></i><i class="r85"></i><i class="r86"></i><i class="r87"></i><i class="r88"></i><i class="r89"></i><i class="r90"></i><i class="r91"></i><i class="r92"></i><i class="r93"></i><i class="r94"></i><i class="r95"></i><i class="r96"></i><i class="r97"></i><i class="r98"></i><i class="r99"></i><i class="r100"></i><i class="r101"></i><i class="r102"></i><i class="r103"></i><i class="r104"></i><i class="r105"></i><i class="r106"></i><i class="r107"></i><i class="r108"></i><i class="r109"></i><i class="r110"></i><i class="r111"></i><i class="r112"></i><i class="r113"></i><i class="r114"></i><i class="r115"></i><i class="r116"></i><i class="r117"></i><i class="r118"></i><i class="r119"></i><i class="r120"></i><i class="r121"></i><i class="r122"></i><i class="r123"></i><i class="r124"></i><i class="r125"></i><i class="r126"></i><i class="r127"></i><i class="r128"></i><i class="r129"></i><i class="r130"></i><i class="r131"></i><i class="r132"></i><i class="r133"></i><i class="r134"></i><i class="r135"></i><i class="r136"></i><i class="r137"></i><i class="r138"></i><i class="r139"></i><i class="r140"></i><i class="r141"></i><i class="r142"></i><i class="r143"></i><i class="r144"></i><i class="r145"></i><i class="r146"></i><i class="r147"></i><i class="r148"></i><i class="r149"></i><i class="r150"></i><i class="r151"></i><i class="r152"></i><i class="r153"></i><i class="r154"></i><i class="r155"></i><i class="r156"></i><i class="r157"></i><i class="r158"></i><i class="r159"></i><i class="r160"></i><i class="r161"></i><i class="r162"></i><i class="r163"></i><i class="r164"></i><i class="r165"></i><i class="r166"></i><i class="r167"></i><i class="r168"></i><i class="r169"></i><i class="r170"></i><i class="r171"></i><i class="r172"></i><i class="r173"></i><i class="r174"></i><i class="r175"></i><i class="r176"></i><i class="r177"></i><i class="r178"></i><i class="r179"></i><i class="r180"></i><i class="r181"></i><i class="r182"></i><i></i></div>
<div class="cie" style="left:1464px;top:635.6px"><i class="r0"></i><i class="r1"></i><i class="r2"></i><i class="r3"></i><i class="r4"></i><i class="r5"></i><i class="r6"></i><i class="r7"></i><i class="r8"></i><i class="r9"></i><i class="r10"></i><i class="r11"></i><i class="r12"></i><i class="r13"></i><i class="r14"></i><i class="r15"></i><i class="r16"></i><i class="r17"></i><i class="r18"></i><i class="r19"></i><i class="r20"></i><i class="r21"></i><i class="r22"></i><i class="r23"></i><i class="r24"></i><i class="r25"></i><i class="r26"></i><i class="r27"></i><i class="r28"></i><i class="r29"></i><i class="r30"></i><i class="r31"></i><i class="r32"></i><i class="r33"></i><i class="r34"></i><i class="r35"></i><i class="r36"></i><i class="r37"></i><i class="r38"></i><i class="r39"></i><i class="r40"></i><i class="r41"></i><i class="r42"></i><i class="r43"></i><i class="r44"></i><i class="r45"></i><i class="r46"></i><i class="r47"></i><i class="r48"></i><i class="r49"></i><i class="r50"></i><i class="r51"></i><i class="r52"></i><i class="r53"></i><i class="r54"></i><i class="r55"></i><i class="r56"></i><i class="r57"></i><i class="r58"></i><i class="r59"></i><i class="r60"></i><i class="r61"></i><i class="r62"></i><i class="r63"></i><i class="r64"></i><i class="r65"></i><i class="r66"></i><i class="r67"></i><i class="r68"></i><i class="r69"></i><i class="r70"></i><i class="r71"></i><i class="r72"></i><i class="r73"></i><i class="r74"></i><i class="r75"></i><i class="r76"></i><i class="r77"></i><i class="r78"></i><i class="r79"></i><i class="r80"></i><i class="r81"></i><i class="r82"></i><i class="r83"></i><i class="r84"></i><i class="r85"></i><i class="r86"></i><i class="r87"></i><i class="r88"></i><i class="r89"></i><i class="r90"></i><i class="r91"></i><i class="r92"></i><i class="r93"></i><i class="r94"></i><i class="r95"></i><i class="r96"></i><i class="r97"></i><i class="r98"></i><i class="r99"></i><i class="r100"></i><i class="r101"></i><i class="r102"></i><i class="r103"></i><i class="r104"></i><i class="r105"></i><i class="r106"></i><i class="r107"></i><i class="r108"></i><i class="r109"></i><i class="r110"></i><i class="r111"></i><i class="r112"></i><i class="r113"></i><i class="r114"></i><i class="r115"></i><i class="r116"></i><i class="r117"></i><i class="r118"></i><i class="r119"></i><i class="r120"></i><i class="r121"></i><i class="r122"></i><i class="r123"></i><i class="r124"></i><i class="r125"></i><i class="r126"></i><i class="r127"></i><i class="r128"></i><i class="r129"></i><i class="r130"></i><i class="r131"></i><i class="r132"></i><i class="r133"></i><i class="r134"></i><i class="r135"></i><i class="r136"></i><i class="r137"></i><i class="r138"></i><i class="r139"></i><i class="r140"></i><i class="r141"></i><i class="r142"></i><i class="r143"></i><i class="r144"></i><i class="r145"></i><i class="r146"></i><i class="r147"></i><i class="r148"></i><i class="r149"></i><i class="r150"></i><i class="r151"></i><i class="r152"></i><i class="r153"></i><i class="r154"></i><i class="r155"></i><i class="r156"></i><i class="r157"></i><i class="r158"></i><i class="r159"></i><i class="r160"></i><i class="r161"></i><i class="r162"></i><i class="r163"></i><i class="r164"></i><i class="r165"></i><i class="r166"></i><i class="r167"></i><i class="r168"></i><i class="r169"></i><i class="r170"></i><i class="r171"></i><i class="r172"></i><i class="r173"></i><i class="r174"></i><i class="r175"></i><i class="r176"></i><i class="r177"></i><i class="r178"></i><i class="r179"></i><i class="r180"></i><i class="r181"></i><i class="r182"></i><i></i></div>
<svg width="1920" height="1080" viewBox="0 0 1920 1080">
<clipPath id="lc0"><path d="M1552.4 575.9 1551.6 576 1550.8 575.7 1550 575.3 1549.3 574.7 1548.5 574.2 1547.7 573.5 1546.9 572.9 1546.1 572.3 1545.4 571.8 1544.7 571.2 1543.9 570.6 1543 570 1542.1 569.3 1541.1 568.6 1540.1 567.7 1538.9 566.7 1537.7 565.7 1537.1 565.1 1536.4 564.4 1535.7 563.8 1535 563.1 1534.3 562.4 1533.5 561.5 1532.7 560.6 1531.9 559.5 1531 558.4 1530 557.2 1529 555.8 1528 554.4 1526.9 552.7 1525.8 551 1524.6 549.1 1523.4 547.1 1522.2 545 1520.9 542.6 1519.5 540 1518.1 537.2 1516.6 534.2 1515.1 531 1513.5 527.6 1511.9 523.9 1510.2 519.8 1508.4 515.6 1506.5 511 1504.6 506.2 1502.6 501.2 1500.7 495.7 1498.7 490 1496.7 483.9 1494.7 477.4 1492.7 470.7 1490.7 463.6 1488.8 456.2 1486.8 448.6 1484.9 440.6 1482.9 432.3 1481 423.6 1479.1 414.8 1477.3 405.9 1475.7 396.9 1474.1 387.9 1472.6 378.6 1471.2 369.3 1469.9 360 1468.8 350.7 1467.9 341.7 1467.1 332.9 1466.5 324.1 1466 315.4 1465.7 306.8 1465.6 298.6 1465.7 290.6 1466 283 1466.6 275.5 1467.3 268.2 1468.2 261.3 1469.4 254.8 1470.8 248.8 1472.4 243.2 1474.3 238 1476.3 233.2 1478.6 228.8 1481 225 1483.5 221.6 1486.2 218.9 1489 216.7 1492.1 214.9 1495.2 213.6 1498.3 212.7 1501.5 212.1 1504.8 211.8 1508.1 212 1511.5 212.6 1515 213.4 1518.4 214.4 1521.9 215.4 1525.3 216.5 1528.8 217.9 1532.2 219.4 1535.7 221 1539.1 222.7 1542.5 224.3 1545.8 226 1549.1 227.7 1552.4 229.5 1555.6 231.3 1558.8 233.1 1562 235 1565.1 236.9 1568.3 238.8 1571.4 240.8 1574.5 242.8 1577.6 244.9 1580.7 247 1583.7 249.1 1586.8 251.2 1589.9 253.4 1593 255.6 1596 257.9 1599.1 260.1 1602.2 262.4 1605.2 264.7 1608.2 267.1 1611.3 269.4 1614.3 271.8 1617.3 274.2 1620.4 276.6 1623.4 279 1626.4 281.4 1629.5 283.9 1632.5 286.4 1635.5 288.8 1638.6 291.3 1641.6 293.8 1644.6 296.4 1647.7 298.9 1650.7 301.4 1653.8 303.9 1656.8 306.5 1659.8 309 1662.8 311.6 1665.9 314.2 1668.9 316.7 1671.9 319.3 1674.9 321.8 1677.9 324.4 1680.9 326.9 1683.9 329.5 1686.9 332 1689.9 334.6 1692.9 337.1 1695.9 339.7 1698.8 342.2 1701.8 344.7 1704.7 347.2 1707.6 349.7 1710.5 352.2 1713.4 354.7 1716.3 357.2 1719.1 359.6 1722 362.1 1724.8 364.5 1727.6 366.9 1730.3 369.3 1733.1 371.6 1735.8 374 1738.5 376.3 1741.2 378.6 1743.9 380.9 1746.5 383.1 1749.1 385.4 1751.7 387.6 1754.2 389.7 1756.7 391.9 1759.2 394 1761.6 396.1 1764 398.1 1766.3 400.1 1768.6 402.1 1770.8 404 1773 405.9 1775.1 407.7 1777.2 409.5 1779.2 411.2 1781.2 412.9 1783.1 414.6 1785 416.2 1786.9 417.8 1788.7 419.4 1790.5 420.9 1792.2 422.4 1793.9 423.8 1795.5 425.2 1797.1 426.6 1798.6 427.8 1800.1 429.1 1801.5 430.3 1802.9 431.5 1804.2 432.6 1805.5 433.7 1806.7 434.8 1807.9 435.8 1809 436.8 1810.1 437.8 1811.2 438.7 1812.2 439.6 1813.2 440.4 1814.2 441.2 1815.1 442 1816 442.8 1816.8 443.5 1817.6 444.2 1818.4 444.8 1819.2 445.5 1819.9 446.1 1820.6 446.7 1821.3 447.3 1821.9 447.9 1822.5 448.4 1823.7 449.4 1824.9 450.4 1825.9 451.3 1826.9 452.2 1827.9 453 1828.8 453.7 1829.6 454.5 1830.3 455.1 1831 455.7 1831.7 456.2 1832.6 457 1833.3 457.6 1834 458.2 1834.7 458.8 1835.3 459.4 1836 459.9 1836.6 460.4 1837.2 461 1837.8 461.5 1838 461.6Z"/></clipPath><path d="M1460 200H1900V590H1460ZM1532.8 559.4 1550.2 224.5 1829.5 451.3Z" fill="#000" fill-opacity=".4" fill-rule="evenodd" clip-path="url(#lc0)"/><path d="M1555.4 577.9L1843 464.4" stroke="#641030" stroke-width="1" opacity=".7"/><clipPath id="lc425"><path d="M1552.4 1001.5 1551.6 1001.6 1550.8 1001.3 1550 1000.9 1549.3 1000.3 1548.5 999.8 1547.7 999.1 1546.9 998.5 1546.1 997.9 1545.4 997.4 1544.7 996.8 1543.9 996.2 1543 995.6 1542.1 994.9 1541.1 994.2 1540.1 993.3 1538.9 992.3 1537.7 991.3 1537.1 990.7 1536.4 990 1535.7 989.4 1535 988.7 1534.3 988 1533.5 987.1 1532.7 986.2 1531.9 985.1 1531 984 1530 982.8 1529 981.4 1528 980 1526.9 978.3 1525.8 976.6 1524.6 974.7 1523.4 972.7 1522.2 970.6 1520.9 968.2 1519.5 965.6 1518.1 962.8 1516.6 959.8 1515.1 956.6 1513.5 953.2 1511.9 949.5 1510.2 945.4 1508.4 941.2 1506.5 936.6 1504.6 931.8 1502.6 926.8 1500.7 921.3 1498.7 915.6 1496.7 909.5 1494.7 903 1492.7 896.3 1490.7 889.2 1488.8 881.8 1486.8 874.2 1484.9 866.2 1482.9 857.9 1481 849.2 1479.1 840.4 1477.3 831.5 1475.7 822.5 1474.1 813.5 1472.6 804.2 1471.2 794.9 1469.9 785.6 1468.8 776.3 1467.9 767.3 1467.1 758.5 1466.5 749.7 1466 741 1465.7 732.4 1465.6 724.2 1465.7 716.2 1466 708.6 1466.6 701.1 1467.3 693.8 1468.2 686.9 1469.4 680.4 1470.8 674.4 1472.4 668.8 1474.3 663.6 1476.3 658.8 1478.6 654.4 1481 650.6 1483.5 647.2 1486.2 644.5 1489 642.3 1492.1 640.5 1495.2 639.2 1498.3 638.3 1501.5 637.7 1504.8 637.4 1508.1 637.6 1511.5 638.2 1515 639 1518.4 640 1521.9 641 1525.3 642.1 1528.8 643.5 1532.2 645 1535.7 646.6 1539.1 648.3 1542.5 649.9 1545.8 651.6 1549.1 653.3 1552.4 655.1 1555.6 656.9 1558.8 658.7 1562 660.6 1565.1 662.5 1568.3 664.4 1571.4 666.4 1574.5 668.4 1577.6 670.5 1580.7 672.6 1583.7 674.7 1586.8 676.8 1589.9 679 1593 681.2 1596 683.5 1599.1 685.7 1602.2 688 1605.2 690.3 1608.2 692.7 1611.3 695 1614.3 697.4 1617.3 699.8 1620.4 702.2 1623.4 704.6 1626.4 707 1629.5 709.5 1632.5 712 1635.5 714.4 1638.6 716.9 1641.6 719.4 1644.6 722 1647.7 724.5 1650.7 727 1653.8 729.5 1656.8 732.1 1659.8 734.6 1662.8 737.2 1665.9 739.8 1668.9 742.3 1671.9 744.9 1674.9 747.4 1677.9 750 1680.9 752.5 1683.9 755.1 1686.9 757.6 1689.9 760.2 1692.9 762.7 1695.9 765.3 1698.8 767.8 1701.8 770.3 1704.7 772.8 1707.6 775.3 1710.5 777.8 1713.4 780.3 1716.3 782.8 1719.1 785.2 1722 787.7 1724.8 790.1 1727.6 792.5 1730.3 794.9 1733.1 797.2 1735.8 799.6 1738.5 801.9 1741.2 804.2 1743.9 806.5 1746.5 808.7 1749.1 811 1751.7 813.2 1754.2 815.3 1756.7 817.5 1759.2 819.6 1761.6 821.7 1764 823.7 1766.3 825.7 1768.6 827.7 1770.8 829.6 1773 831.5 1775.1 833.3 1777.2 835.1 1779.2 836.8 1781.2 838.5 1783.1 840.2 1785 841.8 1786.9 843.4 1788.7 845 1790.5 846.5 1792.2 848 1793.9 849.4 1795.5 850.8 1797.1 852.2 1798.6 853.4 1800.1 854.7 1801.5 855.9 1802.9 857.1 1804.2 858.2 1805.5 859.3 1806.7 860.4 1807.9 861.4 1809 862.4 1810.1 863.4 1811.2 864.3 1812.2 865.2 1813.2 866 1814.2 866.8 1815.1 867.6 1816 868.4 1816.8 869.1 1817.6 869.8 1818.4 870.4 1819.2 871.1 1819.9 871.7 1820.6 872.3 1821.3 872.9 1821.9 873.5 1822.5 874 1823.7 875 1824.9 876 1825.9 876.9 1826.9 877.8 1827.9 878.6 1828.8 879.3 1829.6 880.1 1830.3 880.7 1831 881.3 1831.7 881.8 1832.6 882.6 1833.3 883.2 1834 883.8 1834.7 884.4 1835.3 885 1836 885.5 1836.6 886 1837.2 886.6 1837.8 887.1 1838 887.2Z"/></clipPath><path d="M1460 625.6H1900V1015.6H1460ZM1532.8 985 1550.2 650.1 1829.5 876.9Z" fill="#000" fill-opacity=".4" fill-rule="evenodd" clip-path="url(#lc425)"/><path d="M1555.4 1003.5L1843 890" stroke="#641030" stroke-width="1" opacity=".7"/><path d="M1616.7 316.8h15.4v15.4h-15.4zM1619.9 325.5h15.4v15.4h-15.4zM1620.9 332.5h15.4v15.4h-15.4zM1583.6 356.4h15.4v15.4h-15.4zM1613.9 352.9h15.4v15.4h-15.4zM1612 366.7h15.4v15.4h-15.4zM1644.8 349.8h15.4v15.4h-15.4zM1647.6 350.1h15.4v15.4h-15.4zM1593 376.6h15.4v15.4h-15.4zM1600.9 375.4h15.4v15.4h-15.4zM1664.8 336.1h15.4v15.4h-15.4zM1678.5 343.1h15.4v15.4h-15.4zM1692.6 345.9h15.4v15.4h-15.4zM1630.7 383.6h15.4v15.4h-15.4zM1649 387.4h15.4v15.4h-15.4zM1656.8 393.7h15.4v15.4h-15.4zM1563.5 398.6h15.4v15.4h-15.4zM1561.1 406.6h15.4v15.4h-15.4zM1575.9 409.2h15.4v15.4h-15.4zM1599.5 400h15.4v15.4h-15.4zM1590 410.6h15.4v15.4h-15.4zM1615.3 403.6h15.4v15.4h-15.4zM1700.3 358.6h15.4v15.4h-15.4zM1706.7 358.6h15.4v15.4h-15.4zM1716.5 371.2h15.4v15.4h-15.4zM1719.3 374h15.4v15.4h-15.4zM1741.8 389.5h15.4v15.4h-15.4zM1758 400.7h15.4v15.4h-15.4zM1698.2 369.8h15.4v15.4h-15.4zM1694 393.7h15.4v15.4h-15.4zM1703.2 399.3h15.4v15.4h-15.4zM1677.1 397.9h15.4v15.4h-15.4zM1685.6 409.2h15.4v15.4h-15.4zM1710.9 392.3h15.4v15.4h-15.4zM1705.3 381.1h15.4v15.4h-15.4zM1713.7 386.7h15.4v15.4h-15.4zM1698.2 406.4h15.4v15.4h-15.4zM1691.2 403.6h15.4v15.4h-15.4zM1708.1 406.4h15.4v15.4h-15.4zM1722.1 393.7h15.4v15.4h-15.4zM1681.4 403.6h15.4v15.4h-15.4zM1667.3 392.3h15.4v15.4h-15.4zM1692.6 381.1h15.4v15.4h-15.4zM1556.2 438.6h15.4v15.4h-15.4zM1573.1 432.5h15.4v15.4h-15.4zM1577.3 438.2h15.4v15.4h-15.4zM1549.2 452.6h15.4v15.4h-15.4zM1555.5 455.5h15.4v15.4h-15.4zM1552.7 468.4h15.4v15.4h-15.4zM1592.1 443.1h15.4v15.4h-15.4zM1584.3 448.7h15.4v15.4h-15.4zM1606.8 447.3h15.4v15.4h-15.4zM1592.1 460.7h15.4v15.4h-15.4zM1598.4 469.8h15.4v15.4h-15.4zM1603.3 476.1h15.4v15.4h-15.4zM1620.9 462.1h15.4v15.4h-15.4zM1619.5 483.2h15.4v15.4h-15.4zM1624 494.4h15.4v15.4h-15.4zM1634.7 441.7h15.4v15.4h-15.4zM1644.8 465.3h15.4v15.4h-15.4zM1673.6 454.3h15.4v15.4h-15.4zM1677.1 457.6h15.4v15.4h-15.4zM1694 462.1h15.4v15.4h-15.4zM1689.8 434.4h15.4v15.4h-15.4zM1730.6 427.6h15.4v15.4h-15.4zM1736.2 430.4h15.4v15.4h-15.4zM1725 437.5h15.4v15.4h-15.4zM1734.1 443.8h15.4v15.4h-15.4zM1774.9 436.1h15.4v15.4h-15.4zM1784.7 427.6h15.4v15.4h-15.4zM1787.5 434.6h15.4v15.4h-15.4zM1767.1 421.3h15.4v15.4h-15.4zM1549.9 486.4h15.4v15.4h-15.4zM1563.9 489.5h15.4v15.4h-15.4zM1552 511.3h15.4v15.4h-15.4zM1541 521.1h15.4v15.4h-15.4zM1693.3 415.7h15.4v15.4h-15.4zM1647.6 420.6h15.4v15.4h-15.4zM1677.1 424.8h15.4v15.4h-15.4zM1687 406.5h15.4v15.4h-15.4zM1622.3 410.7h15.4v15.4h-15.4zM1611 407.9h15.4v15.4h-15.4zM1663.1 412.1h15.4v15.4h-15.4z" fill="none" stroke="#fff" stroke-width="1.5"/><rect x="1617" y="426.3" width="15.4" height="15.4" fill="none" stroke="#000" stroke-width="1.6"/><g stroke="#000" stroke-width="1.3"><circle cx="1625.5" cy="339.8" r="4.6" fill="#426d38"/><circle cx="1633.8" cy="350.4" r="4.6" fill="#4a6d3a"/><circle cx="1633.5" cy="357.8" r="4.6" fill="#4c6d3c"/><circle cx="1652.5" cy="369.3" r="4.6" fill="#606d3d"/><circle cx="1656.7" cy="369.3" r="4.6" fill="#646d3c"/><circle cx="1669.4" cy="350.1" r="4.6" fill="#646d34"/><circle cx="1668.7" cy="357.1" r="4.6" fill="#676d36"/><circle cx="1678.5" cy="357.1" r="4.6" fill="#6e6b34"/><circle cx="1686.7" cy="358.5" r="4.6" fill="#6e6434"/><circle cx="1673.3" cy="364.6" r="4.6" fill="#6e6b37"/><circle cx="1679.9" cy="369.3" r="4.6" fill="#6e6337"/><circle cx="1693.3" cy="367.4" r="4.6" fill="#6e5c34"/><circle cx="1697.2" cy="367.7" r="4.6" fill="#6e5934"/><circle cx="1690.5" cy="375.4" r="4.6" fill="#6e5a36"/><circle cx="1705.9" cy="377.5" r="4.6" fill="#6e5234"/><circle cx="1692.6" cy="383.1" r="4.6" fill="#6e5538"/><circle cx="1693.6" cy="386.6" r="4.6" fill="#6e5338"/><circle cx="1704.2" cy="391.8" r="4.6" fill="#6e4d37"/><circle cx="1707.6" cy="398.3" r="4.6" fill="#6e4a38"/><circle cx="1726.6" cy="391.3" r="4.6" fill="#6e4834"/><circle cx="1740.7" cy="398.3" r="4.6" fill="#6e4334"/><circle cx="1628.6" cy="377.2" r="4.6" fill="#506d43"/><circle cx="1605.4" cy="384.8" r="4.6" fill="#416d49"/><circle cx="1624.4" cy="389.5" r="4.6" fill="#516d49"/><circle cx="1611.4" cy="399.3" r="4.6" fill="#4a6d4f"/><circle cx="1611.7" cy="403.5" r="4.6" fill="#4c6d52"/><circle cx="1635.2" cy="401.7" r="4.6" fill="#636d4e"/><circle cx="1647.6" cy="403.1" r="4.6" fill="#6e694c"/><circle cx="1655.6" cy="408.2" r="4.6" fill="#6e5e48"/><circle cx="1682.7" cy="401.7" r="4.6" fill="#6e523d"/><circle cx="1690.8" cy="400" r="4.6" fill="#6e4f3b"/><circle cx="1691.2" cy="407" r="4.6" fill="#6e4d3c"/><circle cx="1696.8" cy="408.2" r="4.6" fill="#6e4a3b"/><circle cx="1667.3" cy="409.1" r="4.6" fill="#6e5644"/><circle cx="1675.7" cy="411.2" r="4.6" fill="#6e5141"/><circle cx="1663" cy="414.3" r="4.6" fill="#6e5646"/><circle cx="1651.8" cy="417.6" r="4.6" fill="#6e5b4c"/><circle cx="1658.8" cy="418" r="4.6" fill="#6e5749"/><circle cx="1672.9" cy="417.6" r="4.6" fill="#6e5043"/><circle cx="1666.6" cy="418.3" r="4.6" fill="#6e5246"/><circle cx="1588.5" cy="425.2" r="4.6" fill="#406d62"/><circle cx="1610.3" cy="422.4" r="4.6" fill="#556d5f"/><circle cx="1622.3" cy="422.4" r="4.6" fill="#636d5e"/><circle cx="1630.7" cy="420.5" r="4.6" fill="#6c6d5c"/><circle cx="1579.4" cy="432.8" r="4.6" fill="#3a6d69"/><circle cx="1594.6" cy="432.8" r="4.6" fill="#496d69"/><circle cx="1604.7" cy="432.8" r="4.6" fill="#556d69"/><circle cx="1618" cy="432.8" r="4.6" fill="#666d69"/><circle cx="1625.8" cy="434.2" r="4.6" fill="#6e6866"/><circle cx="1632.1" cy="434.6" r="4.6" fill="#6e615e"/><circle cx="1639.6" cy="432.8" r="4.6" fill="#6e5b57"/><circle cx="1645.5" cy="425.8" r="4.6" fill="#6e5b52"/><circle cx="1621.6" cy="441.6" r="4.6" fill="#6c646a"/><circle cx="1618.8" cy="440.2" r="4.6" fill="#68666a"/><circle cx="1678.5" cy="425.5" r="4.6" fill="#6e4a43"/><circle cx="1658.8" cy="424.1" r="4.6" fill="#6e534a"/><circle cx="1664.5" cy="439.5" r="4.6" fill="#6e4a4a"/><circle cx="1673.6" cy="443.5" r="4.6" fill="#6e4547"/><circle cx="1714.4" cy="432.8" r="4.6" fill="#6e3f3c"/><circle cx="1718.9" cy="436" r="4.6" fill="#6e3e3c"/><circle cx="1707.6" cy="445.2" r="4.6" fill="#6e3d3f"/><circle cx="1714.1" cy="451.5" r="4.6" fill="#6e3b3e"/><circle cx="1749.5" cy="422.4" r="4.6" fill="#6e3d36"/><circle cx="1768.5" cy="426.2" r="4.6" fill="#6e3a35"/><circle cx="1757.7" cy="437.4" r="4.6" fill="#6e3937"/><circle cx="1769.5" cy="434.6" r="4.6" fill="#6e3936"/><circle cx="1588.5" cy="450.1" r="4.6" fill="#475f6a"/><circle cx="1576.6" cy="457.5" r="4.6" fill="#3e5b6a"/><circle cx="1591.8" cy="456.7" r="4.6" fill="#4b5a6a"/><circle cx="1599.8" cy="459.9" r="4.6" fill="#53576a"/><circle cx="1610.3" cy="462.3" r="4.6" fill="#5e546a"/><circle cx="1630.4" cy="456.4" r="4.6" fill="#6e5263"/><circle cx="1594.1" cy="467" r="4.6" fill="#4f536a"/><circle cx="1599.8" cy="473.3" r="4.6" fill="#554e6a"/><circle cx="1568.8" cy="470.5" r="4.6" fill="#3b536a"/><circle cx="1574.9" cy="470.5" r="4.6" fill="#3f536a"/><circle cx="1571.6" cy="481" r="4.6" fill="#3f4d6a"/><circle cx="1602.6" cy="483.8" r="4.6" fill="#58486a"/><circle cx="1605.4" cy="488.8" r="4.6" fill="#5b456a"/><circle cx="1621.6" cy="476.1" r="4.6" fill="#6a4a6a"/><circle cx="1633.5" cy="479.3" r="4.6" fill="#6e4462"/><circle cx="1619.5" cy="494.4" r="4.6" fill="#68406a"/><circle cx="1661.6" cy="464.6" r="4.6" fill="#6e414f"/><circle cx="1659.5" cy="470.8" r="4.6" fill="#6e3f51"/><circle cx="1673.6" cy="473.3" r="4.6" fill="#6e3c4b"/><circle cx="1563.6" cy="502.5" r="4.6" fill="#3e456a"/><circle cx="1574.5" cy="504.2" r="4.6" fill="#45426a"/><circle cx="1577.3" cy="502.1" r="4.6" fill="#46436a"/><circle cx="1618" cy="508.4" r="4.6" fill="#663a6a"/><circle cx="1563.6" cy="524.6" r="4.6" fill="#413c6a"/><circle cx="1553.1" cy="536.6" r="4.6" fill="#3d3a6a"/><circle cx="1620" cy="441.5" r="4.6" fill="#2b2b2b"/></g><path d="M1616.7 742.4h15.4v15.4h-15.4zM1619.9 751.1h15.4v15.4h-15.4zM1620.9 758.1h15.4v15.4h-15.4zM1583.6 782h15.4v15.4h-15.4zM1613.9 778.5h15.4v15.4h-15.4zM1612 792.3h15.4v15.4h-15.4zM1644.8 775.4h15.4v15.4h-15.4zM1647.6 775.7h15.4v15.4h-15.4zM1593 802.2h15.4v15.4h-15.4zM1600.9 801h15.4v15.4h-15.4zM1664.8 761.7h15.4v15.4h-15.4zM1678.5 768.7h15.4v15.4h-15.4zM1692.6 771.5h15.4v15.4h-15.4zM1630.7 809.2h15.4v15.4h-15.4zM1649 813h15.4v15.4h-15.4zM1656.8 819.3h15.4v15.4h-15.4zM1563.5 824.2h15.4v15.4h-15.4zM1561.1 832.2h15.4v15.4h-15.4zM1575.9 834.8h15.4v15.4h-15.4zM1599.5 825.6h15.4v15.4h-15.4zM1590 836.2h15.4v15.4h-15.4zM1615.3 829.2h15.4v15.4h-15.4zM1700.3 784.2h15.4v15.4h-15.4zM1706.7 784.2h15.4v15.4h-15.4zM1716.5 796.8h15.4v15.4h-15.4zM1719.3 799.6h15.4v15.4h-15.4zM1741.8 815.1h15.4v15.4h-15.4zM1758 826.3h15.4v15.4h-15.4zM1698.2 795.4h15.4v15.4h-15.4zM1694 819.3h15.4v15.4h-15.4zM1703.2 824.9h15.4v15.4h-15.4zM1677.1 823.5h15.4v15.4h-15.4zM1685.6 834.8h15.4v15.4h-15.4zM1710.9 817.9h15.4v15.4h-15.4zM1705.3 806.7h15.4v15.4h-15.4zM1713.7 812.3h15.4v15.4h-15.4zM1698.2 832h15.4v15.4h-15.4zM1691.2 829.2h15.4v15.4h-15.4zM1708.1 832h15.4v15.4h-15.4zM1722.1 819.3h15.4v15.4h-15.4zM1681.4 829.2h15.4v15.4h-15.4zM1667.3 817.9h15.4v15.4h-15.4zM1692.6 806.7h15.4v15.4h-15.4zM1556.2 864.2h15.4v15.4h-15.4zM1573.1 858.1h15.4v15.4h-15.4zM1577.3 863.8h15.4v15.4h-15.4zM1549.2 878.2h15.4v15.4h-15.4zM1555.5 881.1h15.4v15.4h-15.4zM1552.7 894h15.4v15.4h-15.4zM1592.1 868.7h15.4v15.4h-15.4zM1584.3 874.3h15.4v15.4h-15.4zM1606.8 872.9h15.4v15.4h-15.4zM1592.1 886.3h15.4v15.4h-15.4zM1598.4 895.4h15.4v15.4h-15.4zM1603.3 901.7h15.4v15.4h-15.4zM1620.9 887.7h15.4v15.4h-15.4zM1619.5 908.8h15.4v15.4h-15.4zM1624 920h15.4v15.4h-15.4zM1634.7 867.3h15.4v15.4h-15.4zM1644.8 890.9h15.4v15.4h-15.4zM1673.6 879.9h15.4v15.4h-15.4zM1677.1 883.2h15.4v15.4h-15.4zM1694 887.7h15.4v15.4h-15.4zM1689.8 860h15.4v15.4h-15.4zM1730.6 853.2h15.4v15.4h-15.4zM1736.2 856h15.4v15.4h-15.4zM1725 863.1h15.4v15.4h-15.4zM1734.1 869.4h15.4v15.4h-15.4zM1774.9 861.7h15.4v15.4h-15.4zM1784.7 853.2h15.4v15.4h-15.4zM1787.5 860.2h15.4v15.4h-15.4zM1767.1 846.9h15.4v15.4h-15.4zM1549.9 912h15.4v15.4h-15.4zM1563.9 915.1h15.4v15.4h-15.4zM1552 936.9h15.4v15.4h-15.4zM1541 946.7h15.4v15.4h-15.4zM1693.3 841.3h15.4v15.4h-15.4zM1647.6 846.2h15.4v15.4h-15.4zM1677.1 850.4h15.4v15.4h-15.4zM1687 832.1h15.4v15.4h-15.4zM1622.3 836.3h15.4v15.4h-15.4zM1611 833.5h15.4v15.4h-15.4zM1663.1 837.7h15.4v15.4h-15.4z" fill="none" stroke="#fff" stroke-width="1.5"/><rect x="1617" y="851.9" width="15.4" height="15.4" fill="none" stroke="#000" stroke-width="1.6"/><g stroke="#000" stroke-width="1.3"><circle cx="1622.5" cy="759.1" r="4.6" fill="#3f6d37"/><circle cx="1632.1" cy="770.1" r="4.6" fill="#476d38"/><circle cx="1633.5" cy="776.1" r="4.6" fill="#4a6d3a"/><circle cx="1652.5" cy="788.8" r="4.6" fill="#5d6d3b"/><circle cx="1656" cy="790.2" r="4.6" fill="#606d3b"/><circle cx="1669.4" cy="775" r="4.6" fill="#646d34"/><circle cx="1668.7" cy="779.2" r="4.6" fill="#656d35"/><circle cx="1678.5" cy="780.6" r="4.6" fill="#6e6d34"/><circle cx="1686.7" cy="783.7" r="4.6" fill="#6e6434"/><circle cx="1673.3" cy="786.9" r="4.6" fill="#6e6d36"/><circle cx="1681.3" cy="793" r="4.6" fill="#6e6336"/><circle cx="1693.3" cy="791.1" r="4.6" fill="#6e5c34"/><circle cx="1697.2" cy="792.3" r="4.6" fill="#6e5a34"/><circle cx="1692.6" cy="798.9" r="4.6" fill="#6e5936"/><circle cx="1705.9" cy="801.7" r="4.6" fill="#6e5234"/><circle cx="1709.5" cy="803.8" r="4.6" fill="#6e5034"/><circle cx="1694.7" cy="806.6" r="4.6" fill="#6e5537"/><circle cx="1696.8" cy="809" r="4.6" fill="#6e5337"/><circle cx="1707.6" cy="815.8" r="4.6" fill="#6e4d37"/><circle cx="1709.9" cy="820.7" r="4.6" fill="#6e4b37"/><circle cx="1728.2" cy="816.5" r="4.6" fill="#6e4734"/><circle cx="1741.5" cy="825.9" r="4.6" fill="#6e4234"/><circle cx="1630.4" cy="794.9" r="4.6" fill="#4e6d40"/><circle cx="1605.4" cy="798.9" r="4.6" fill="#3e6d45"/><circle cx="1625.4" cy="807" r="4.6" fill="#4f6d45"/><circle cx="1608.5" cy="817.9" r="4.6" fill="#456d4c"/><circle cx="1613.8" cy="818.1" r="4.6" fill="#4a6d4c"/><circle cx="1636.3" cy="819.4" r="4.6" fill="#5f6d4a"/><circle cx="1652.5" cy="822.1" r="4.6" fill="#6e6947"/><circle cx="1653.6" cy="827" r="4.6" fill="#6e6548"/><circle cx="1685.5" cy="823.5" r="4.6" fill="#6e523c"/><circle cx="1692.6" cy="820.7" r="4.6" fill="#6e513a"/><circle cx="1692.6" cy="828.8" r="4.6" fill="#6e4d3b"/><circle cx="1698.9" cy="828.8" r="4.6" fill="#6e4b3a"/><circle cx="1672.2" cy="828.4" r="4.6" fill="#6e5741"/><circle cx="1681.3" cy="829.8" r="4.6" fill="#6e523e"/><circle cx="1667.3" cy="833.6" r="4.6" fill="#6e5743"/><circle cx="1590.6" cy="839.8" r="4.6" fill="#3e6d5a"/><circle cx="1613.4" cy="838.1" r="4.6" fill="#526d57"/><circle cx="1625.5" cy="840.9" r="4.6" fill="#626d58"/><circle cx="1633.9" cy="840.1" r="4.6" fill="#6b6d57"/><circle cx="1579.7" cy="849" r="4.6" fill="#396d61"/><circle cx="1596.2" cy="847.1" r="4.6" fill="#466d5f"/><circle cx="1605.4" cy="849" r="4.6" fill="#506d60"/><circle cx="1622.5" cy="850.4" r="4.6" fill="#656d61"/><circle cx="1630" cy="853.9" r="4.6" fill="#6e6860"/><circle cx="1636.6" cy="853.9" r="4.6" fill="#6e6159"/><circle cx="1645.5" cy="851.8" r="4.6" fill="#6e5b52"/><circle cx="1652.5" cy="845.7" r="4.6" fill="#6e594c"/><circle cx="1649.7" cy="843.3" r="4.6" fill="#6e5d4e"/><circle cx="1661.6" cy="842.9" r="4.6" fill="#6e5547"/><circle cx="1684.8" cy="846.1" r="4.6" fill="#6e4a40"/><circle cx="1679.9" cy="838.4" r="4.6" fill="#6e4f40"/><circle cx="1658.1" cy="837" r="4.6" fill="#6e5b48"/><circle cx="1672.9" cy="837" r="4.6" fill="#6e5242"/><circle cx="1619.5" cy="863" r="4.6" fill="#69696a"/><circle cx="1624.4" cy="861.6" r="4.6" fill="#6e6868"/><circle cx="1627.9" cy="862.3" r="4.6" fill="#6e6363"/><circle cx="1672.5" cy="860.2" r="4.6" fill="#6e4946"/><circle cx="1681.8" cy="864.4" r="4.6" fill="#6e4544"/><circle cx="1721.4" cy="855" r="4.6" fill="#6e3f3a"/><circle cx="1724.5" cy="860.2" r="4.6" fill="#6e3d3b"/><circle cx="1710.9" cy="867.7" r="4.6" fill="#6e3e3e"/><circle cx="1721.4" cy="873.9" r="4.6" fill="#6e3b3d"/><circle cx="1754.5" cy="847.1" r="4.6" fill="#6e3c36"/><circle cx="1771.8" cy="853.9" r="4.6" fill="#6e3935"/><circle cx="1761.9" cy="860.9" r="4.6" fill="#6e3937"/><circle cx="1771.3" cy="859.8" r="4.6" fill="#6e3936"/><circle cx="1590.6" cy="867.7" r="4.6" fill="#47656a"/><circle cx="1577.5" cy="873.9" r="4.6" fill="#3c616a"/><circle cx="1593.7" cy="874.3" r="4.6" fill="#4c606a"/><circle cx="1602.6" cy="876.4" r="4.6" fill="#555d6a"/><circle cx="1600.8" cy="879.9" r="4.6" fill="#535b6a"/><circle cx="1613.4" cy="881.6" r="4.6" fill="#61586a"/><circle cx="1596.2" cy="884.5" r="4.6" fill="#50586a"/><circle cx="1635.2" cy="875" r="4.6" fill="#6e535d"/><circle cx="1567" cy="887.9" r="4.6" fill="#39586a"/><circle cx="1574.9" cy="889" r="4.6" fill="#3e576a"/><circle cx="1602.6" cy="894" r="4.6" fill="#57516a"/><circle cx="1622.5" cy="894.9" r="4.6" fill="#6c4e6a"/><circle cx="1641.5" cy="900" r="4.6" fill="#6e435b"/><circle cx="1571.6" cy="902" r="4.6" fill="#3e506a"/><circle cx="1605.4" cy="904.8" r="4.6" fill="#5a4a6a"/><circle cx="1608.9" cy="909.4" r="4.6" fill="#5e476a"/><circle cx="1621.6" cy="916.9" r="4.6" fill="#6a416a"/><circle cx="1664" cy="887.9" r="4.6" fill="#6e414e"/><circle cx="1669.4" cy="891.1" r="4.6" fill="#6e3f4c"/><circle cx="1683.2" cy="894" r="4.6" fill="#6e3b48"/><circle cx="1562.5" cy="925.2" r="4.6" fill="#3c466a"/><circle cx="1574.5" cy="926.3" r="4.6" fill="#44446a"/><circle cx="1576.8" cy="925.9" r="4.6" fill="#46446a"/><circle cx="1624.4" cy="931.2" r="4.6" fill="#6c3a6a"/><circle cx="1563.6" cy="948.1" r="4.6" fill="#413d6a"/><circle cx="1553.1" cy="960.5" r="4.6" fill="#3d3a6a"/><circle cx="1620.5" cy="861.4" r="4.6" fill="#2b2b2b"/><circle cx="1624.5" cy="860.9" r="4.6" fill="#2b2b2b"/><circle cx="1628" cy="861.8" r="4.6" fill="#2b2b2b"/></g><rect x="1914" y="23" width="6" height="1057" fill="url(#rsh)"/>
</svg>
</body></html>
